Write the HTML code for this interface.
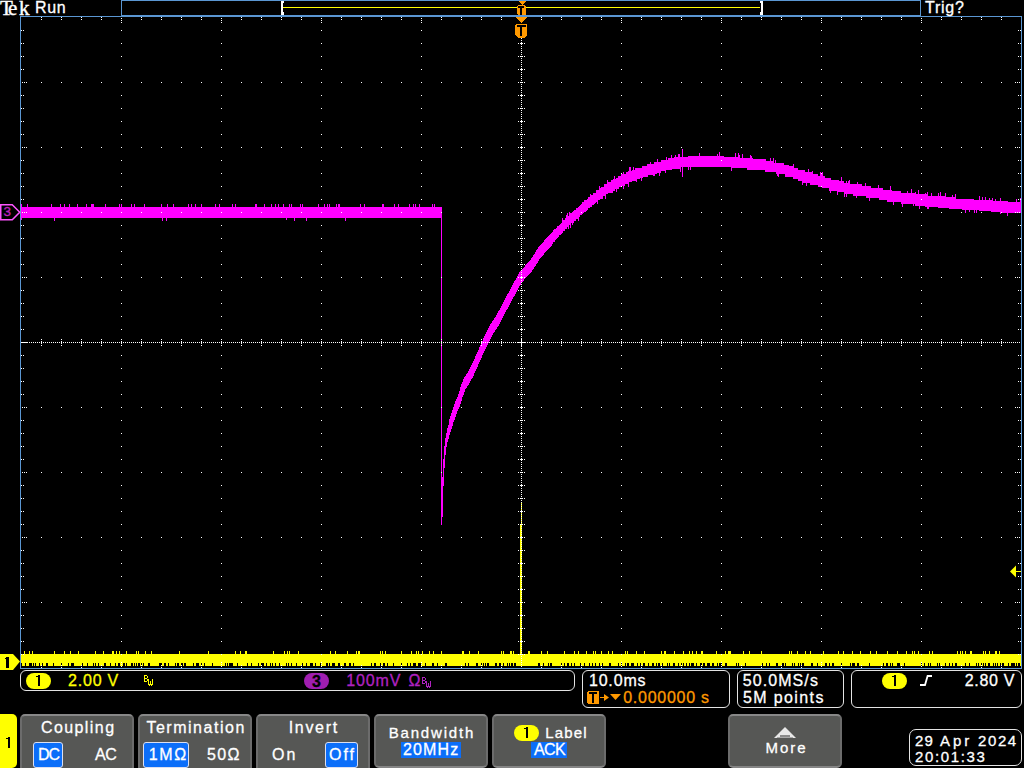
<!DOCTYPE html>
<html><head><meta charset="utf-8"><style>
html,body{margin:0;padding:0;background:#000;width:1024px;height:768px;overflow:hidden;position:relative}
.t{position:absolute;font-family:"Liberation Sans", sans-serif;white-space:pre;line-height:1;color:#fff;-webkit-text-stroke:0.3px currentColor}
.bk{font-size:16px;color:#000;font-weight:bold}
.tek{top:-2px;font-family:'Liberation Serif',serif;font-size:21px;-webkit-text-stroke:0.4px #fff}
.box{position:absolute;border:1px solid #e4e4e4;border-radius:6px;box-sizing:border-box}
.btn{position:absolute;background:#565755;border:2px solid #6c6c6c;border-top-color:#888;border-bottom-color:#858585;border-radius:5px;box-sizing:border-box}
.hl{position:absolute;background:#0b6ef9;border:1px solid #dcdff0;border-radius:3px;box-sizing:border-box}
.pill{position:absolute;border-radius:8px;background:#ffff00}
</style></head><body>
<svg width="1024" height="768" viewBox="0 0 1024 768" shape-rendering="crispEdges" style="position:absolute;left:0;top:0">
<rect x="0" y="0" width="1024" height="768" fill="#000"/>
<!-- record view box -->
<path fill="#5a96d2" d="M121 0h800v1h-800zM121 15h800v1h-800zM121 0h1v16h-1zM920 0h1v16h-1z"/>
<path fill="#ffff00" d="M283 7h477v1h-477z"/>
<path fill="#fff" d="M281 1h2v14h-2zM283 1h1v2h-1zM283 12h1v3h-1zM761 1h2v14h-2zM760 1h1v2h-1zM760 12h1v3h-1z"/>
<!-- graticule border -->
<path fill="#5a96d2" d="M20 16h1002v1h-1002zM20 668h1002v1h-1002zM20 16h1v653h-1zM1021 16h1v653h-1z"/>
<!-- traces -->
<path fill="#ff00ff" d="M21 207h421v11h-421zM441 218h1v307h-1zM442 477h1v40h-1zM443 459h1v27h-1zM444 446h1v22h-1zM445 438h1v17h-1zM446 433h1v14h-1zM447 428h1v14h-1zM448 425h1v14h-1zM449 419h1v16h-1zM450 416h1v16h-1zM451 413h1v16h-1zM452 410h1v16h-1zM453 407h1v15h-1zM454 404h1v16h-1zM455 401h1v16h-1zM456 399h1v15h-1zM457 397h1v14h-1zM458 394h1v15h-1zM459 391h1v16h-1zM460 387h1v17h-1zM461 384h1v17h-1zM462 382h1v15h-1zM463 379h1v16h-1zM464 377h1v15h-1zM465 376h1v13h-1zM466 374h1v14h-1zM467 373h1v13h-1zM468 371h1v14h-1zM469 369h1v14h-1zM470 367h1v14h-1zM471 365h1v14h-1zM472 363h1v15h-1zM473 361h1v15h-1zM474 359h1v14h-1zM475 356h1v15h-1zM476 354h1v15h-1zM477 352h1v15h-1zM478 350h1v14h-1zM479 347h1v15h-1zM480 345h1v15h-1zM481 343h1v15h-1zM482 341h1v14h-1zM483 338h1v15h-1zM484 336h1v15h-1zM485 334h1v15h-1zM486 332h1v15h-1zM487 330h1v15h-1zM488 328h1v15h-1zM489 326h1v15h-1zM490 324h1v15h-1zM491 323h1v14h-1zM492 321h1v14h-1zM493 320h1v13h-1zM494 318h1v14h-1zM495 317h1v13h-1zM496 315h1v14h-1zM497 313h1v14h-1zM498 311h1v15h-1zM499 310h1v14h-1zM500 308h1v14h-1zM501 306h1v14h-1zM502 304h1v14h-1zM503 302h1v14h-1zM504 300h1v14h-1zM505 298h1v14h-1zM506 296h1v14h-1zM507 294h1v15h-1zM508 293h1v14h-1zM509 291h1v14h-1zM510 289h1v14h-1zM511 287h1v14h-1zM512 285h1v14h-1zM513 283h1v14h-1zM514 281h1v15h-1zM515 280h1v14h-1zM516 278h1v14h-1zM517 276h1v14h-1zM518 274h1v14h-1zM519 272h1v14h-1zM520 271h1v14h-1zM521 270h1v13h-1zM522 269h1v13h-1zM523 268h1v13h-1zM524 267h1v12h-1zM525 265h1v13h-1zM526 264h1v13h-1zM527 263h1v13h-1zM528 262h1v13h-1zM529 261h1v13h-1zM530 260h1v13h-1zM531 258h1v14h-1zM532 257h1v13h-1zM533 255h1v14h-1zM534 254h1v13h-1zM535 252h1v14h-1zM536 250h1v14h-1zM537 249h1v14h-1zM538 247h1v14h-1zM539 246h1v13h-1zM540 245h1v13h-1zM541 244h1v13h-1zM542 243h1v13h-1zM543 242h1v13h-1zM544 240h1v13h-1zM545 239h1v13h-1zM546 238h1v13h-1zM547 237h1v13h-1zM548 236h1v13h-1zM549 235h1v13h-1zM550 234h1v13h-1zM551 233h1v13h-1zM552 232h1v12h-1zM553 230h1v12h-1zM554 229h1v13h-1zM555 229h1v11h-1zM556 228h1v11h-1zM557 226h1v12h-1zM558 226h1v11h-1zM559 225h1v10h-1zM560 224h1v11h-1zM561 223h1v11h-1zM562 222h1v11h-1zM563 220h1v11h-1zM564 220h1v11h-1zM565 218h1v11h-1zM566 218h1v11h-1zM567 217h1v10h-1zM568 216h1v11h-1zM569 215h1v10h-1zM570 213h1v12h-1zM571 213h1v10h-1zM572 212h1v11h-1zM573 211h1v12h-1zM574 210h1v11h-1zM575 210h1v11h-1zM576 208h1v11h-1zM577 208h1v11h-1zM578 207h1v11h-1zM579 206h1v11h-1zM580 205h1v10h-1zM581 204h1v11h-1zM582 202h1v12h-1zM583 202h1v11h-1zM584 200h1v12h-1zM585 200h1v12h-1zM586 200h1v11h-1zM587 199h1v11h-1zM588 197h1v11h-1zM589 197h1v11h-1zM590 197h1v10h-1zM591 195h1v12h-1zM592 195h1v10h-1zM593 193h1v12h-1zM594 193h1v11h-1zM595 193h1v10h-1zM596 190h1v12h-1zM597 190h1v12h-1zM598 190h1v10h-1zM599 189h1v11h-1zM600 188h1v11h-1zM601 187h1v12h-1zM602 187h1v12h-1zM603 187h1v9h-1zM604 184h1v12h-1zM605 184h1v12h-1zM606 184h1v10h-1zM607 182h1v12h-1zM608 182h1v11h-1zM609 182h1v11h-1zM610 182h1v11h-1zM611 180h1v13h-1zM612 180h1v11h-1zM613 179h1v12h-1zM614 179h1v12h-1zM615 179h1v10h-1zM616 178h1v11h-1zM617 178h1v11h-1zM618 176h1v13h-1zM619 176h1v11h-1zM620 176h1v11h-1zM621 176h1v11h-1zM622 174h1v12h-1zM623 174h1v12h-1zM624 174h1v12h-1zM625 174h1v10h-1zM626 172h1v12h-1zM627 172h1v12h-1zM628 171h1v13h-1zM629 171h1v11h-1zM630 171h1v11h-1zM631 171h1v11h-1zM632 170h1v11h-1zM633 170h1v11h-1zM634 170h1v11h-1zM635 168h1v13h-1zM636 168h1v11h-1zM637 168h1v11h-1zM638 168h1v11h-1zM639 168h1v11h-1zM640 168h1v10h-1zM641 168h1v10h-1zM642 166h1v12h-1zM643 166h1v11h-1zM644 166h1v11h-1zM645 166h1v11h-1zM646 166h1v11h-1zM647 164h1v13h-1zM648 164h1v11h-1zM649 164h1v11h-1zM650 164h1v11h-1zM651 164h1v11h-1zM652 164h1v11h-1zM653 164h1v10h-1zM654 162h1v12h-1zM655 162h1v12h-1zM656 162h1v12h-1zM657 162h1v11h-1zM658 162h1v11h-1zM659 162h1v11h-1zM660 162h1v11h-1zM661 160h1v11h-1zM662 160h1v11h-1zM663 160h1v11h-1zM664 160h1v11h-1zM665 160h1v10h-1zM666 160h1v10h-1zM667 160h1v10h-1zM668 158h1v12h-1zM669 158h1v12h-1zM670 158h1v12h-1zM671 158h1v12h-1zM672 158h1v11h-1zM673 158h1v11h-1zM674 157h1v12h-1zM675 157h1v12h-1zM676 157h1v12h-1zM677 157h1v12h-1zM678 157h1v12h-1zM679 157h1v12h-1zM680 157h1v12h-1zM681 157h1v10h-1zM682 157h1v10h-1zM683 157h1v10h-1zM684 157h1v10h-1zM685 157h1v10h-1zM686 157h1v10h-1zM687 157h1v10h-1zM688 156h1v11h-1zM689 156h1v11h-1zM690 156h1v11h-1zM691 156h1v11h-1zM692 156h1v11h-1zM693 156h1v11h-1zM694 156h1v11h-1zM695 156h1v11h-1zM696 156h1v11h-1zM697 156h1v11h-1zM698 156h1v11h-1zM699 156h1v11h-1zM700 156h1v11h-1zM701 156h1v11h-1zM702 156h1v11h-1zM703 156h1v11h-1zM704 156h1v11h-1zM705 156h1v11h-1zM706 156h1v11h-1zM707 156h1v11h-1zM708 156h1v11h-1zM709 156h1v11h-1zM710 156h1v11h-1zM711 156h1v11h-1zM712 156h1v11h-1zM713 156h1v11h-1zM714 156h1v11h-1zM715 156h1v11h-1zM716 156h1v11h-1zM717 156h1v11h-1zM718 156h1v11h-1zM719 156h1v11h-1zM720 156h1v11h-1zM721 156h1v11h-1zM722 156h1v11h-1zM723 156h1v11h-1zM724 157h1v10h-1zM725 157h1v10h-1zM726 157h1v10h-1zM727 157h1v10h-1zM728 157h1v10h-1zM729 157h1v10h-1zM730 157h1v10h-1zM731 157h1v11h-1zM732 157h1v11h-1zM733 157h1v11h-1zM734 157h1v11h-1zM735 157h1v11h-1zM736 157h1v11h-1zM737 157h1v11h-1zM738 157h1v11h-1zM739 158h1v10h-1zM740 158h1v10h-1zM741 158h1v10h-1zM742 158h1v10h-1zM743 158h1v10h-1zM744 158h1v10h-1zM745 158h1v10h-1zM746 158h1v10h-1zM747 158h1v12h-1zM748 158h1v12h-1zM749 158h1v12h-1zM750 158h1v12h-1zM751 158h1v12h-1zM752 158h1v12h-1zM753 159h1v11h-1zM754 159h1v11h-1zM755 159h1v11h-1zM756 159h1v11h-1zM757 159h1v11h-1zM758 159h1v11h-1zM759 159h1v11h-1zM760 159h1v11h-1zM761 159h1v11h-1zM762 159h1v11h-1zM763 159h1v11h-1zM764 159h1v11h-1zM765 159h1v13h-1zM766 161h1v11h-1zM767 161h1v11h-1zM768 161h1v11h-1zM769 161h1v11h-1zM770 161h1v11h-1zM771 161h1v11h-1zM772 161h1v11h-1zM773 161h1v11h-1zM774 163h1v9h-1zM775 163h1v9h-1zM776 163h1v11h-1zM777 163h1v11h-1zM778 163h1v11h-1zM779 163h1v11h-1zM780 163h1v11h-1zM781 163h1v11h-1zM782 163h1v11h-1zM783 163h1v11h-1zM784 165h1v9h-1zM785 165h1v12h-1zM786 165h1v12h-1zM787 165h1v12h-1zM788 165h1v12h-1zM789 166h1v11h-1zM790 166h1v11h-1zM791 166h1v11h-1zM792 166h1v11h-1zM793 168h1v11h-1zM794 168h1v11h-1zM795 168h1v11h-1zM796 168h1v11h-1zM797 168h1v11h-1zM798 170h1v11h-1zM799 170h1v11h-1zM800 170h1v11h-1zM801 170h1v11h-1zM802 170h1v13h-1zM803 170h1v13h-1zM804 170h1v13h-1zM805 172h1v11h-1zM806 172h1v11h-1zM807 172h1v11h-1zM808 172h1v11h-1zM809 172h1v11h-1zM810 172h1v13h-1zM811 172h1v13h-1zM812 174h1v11h-1zM813 174h1v11h-1zM814 174h1v11h-1zM815 174h1v11h-1zM816 174h1v11h-1zM817 174h1v11h-1zM818 176h1v11h-1zM819 176h1v11h-1zM820 176h1v11h-1zM821 176h1v11h-1zM822 176h1v12h-1zM823 176h1v12h-1zM824 176h1v12h-1zM825 178h1v10h-1zM826 178h1v10h-1zM827 178h1v10h-1zM828 178h1v10h-1zM829 178h1v13h-1zM830 178h1v13h-1zM831 180h1v11h-1zM832 180h1v11h-1zM833 180h1v11h-1zM834 180h1v11h-1zM835 180h1v11h-1zM836 180h1v11h-1zM837 180h1v12h-1zM838 180h1v12h-1zM839 181h1v11h-1zM840 181h1v11h-1zM841 181h1v11h-1zM842 181h1v11h-1zM843 181h1v11h-1zM844 183h1v11h-1zM845 183h1v11h-1zM846 183h1v11h-1zM847 183h1v11h-1zM848 183h1v11h-1zM849 183h1v11h-1zM850 184h1v10h-1zM851 184h1v10h-1zM852 184h1v10h-1zM853 184h1v12h-1zM854 184h1v12h-1zM855 184h1v12h-1zM856 184h1v12h-1zM857 184h1v12h-1zM858 184h1v12h-1zM859 184h1v12h-1zM860 184h1v12h-1zM861 184h1v12h-1zM862 186h1v10h-1zM863 186h1v10h-1zM864 186h1v10h-1zM865 186h1v10h-1zM866 186h1v12h-1zM867 186h1v12h-1zM868 186h1v12h-1zM869 186h1v12h-1zM870 186h1v12h-1zM871 188h1v10h-1zM872 188h1v10h-1zM873 188h1v10h-1zM874 188h1v10h-1zM875 188h1v10h-1zM876 188h1v10h-1zM877 188h1v10h-1zM878 188h1v10h-1zM879 188h1v12h-1zM880 188h1v12h-1zM881 188h1v12h-1zM882 188h1v12h-1zM883 190h1v10h-1zM884 190h1v10h-1zM885 190h1v10h-1zM886 190h1v10h-1zM887 190h1v12h-1zM888 190h1v12h-1zM889 190h1v12h-1zM890 190h1v12h-1zM891 190h1v12h-1zM892 191h1v11h-1zM893 191h1v11h-1zM894 191h1v11h-1zM895 191h1v11h-1zM896 191h1v11h-1zM897 191h1v11h-1zM898 191h1v11h-1zM899 191h1v11h-1zM900 191h1v11h-1zM901 193h1v11h-1zM902 193h1v11h-1zM903 193h1v11h-1zM904 193h1v11h-1zM905 193h1v11h-1zM906 193h1v11h-1zM907 193h1v11h-1zM908 193h1v11h-1zM909 193h1v11h-1zM910 193h1v11h-1zM911 193h1v11h-1zM912 193h1v11h-1zM913 193h1v11h-1zM914 193h1v11h-1zM915 194h1v12h-1zM916 194h1v12h-1zM917 194h1v12h-1zM918 194h1v12h-1zM919 194h1v12h-1zM920 194h1v12h-1zM921 194h1v12h-1zM922 194h1v12h-1zM923 194h1v12h-1zM924 194h1v12h-1zM925 196h1v11h-1zM926 196h1v11h-1zM927 196h1v11h-1zM928 196h1v11h-1zM929 196h1v11h-1zM930 196h1v11h-1zM931 196h1v11h-1zM932 196h1v11h-1zM933 196h1v11h-1zM934 196h1v11h-1zM935 196h1v11h-1zM936 196h1v11h-1zM937 196h1v11h-1zM938 196h1v12h-1zM939 196h1v12h-1zM940 196h1v12h-1zM941 196h1v12h-1zM942 196h1v12h-1zM943 196h1v12h-1zM944 196h1v12h-1zM945 197h1v11h-1zM946 197h1v11h-1zM947 197h1v11h-1zM948 197h1v11h-1zM949 197h1v12h-1zM950 197h1v12h-1zM951 197h1v12h-1zM952 197h1v12h-1zM953 197h1v12h-1zM954 197h1v12h-1zM955 197h1v12h-1zM956 199h1v10h-1zM957 199h1v10h-1zM958 199h1v10h-1zM959 199h1v10h-1zM960 199h1v10h-1zM961 199h1v10h-1zM962 199h1v11h-1zM963 199h1v11h-1zM964 199h1v11h-1zM965 199h1v11h-1zM966 199h1v11h-1zM967 199h1v11h-1zM968 199h1v11h-1zM969 199h1v11h-1zM970 199h1v11h-1zM971 199h1v11h-1zM972 199h1v11h-1zM973 199h1v11h-1zM974 200h1v10h-1zM975 200h1v10h-1zM976 200h1v10h-1zM977 200h1v10h-1zM978 200h1v10h-1zM979 200h1v11h-1zM980 200h1v11h-1zM981 200h1v11h-1zM982 200h1v11h-1zM983 200h1v11h-1zM984 200h1v11h-1zM985 200h1v11h-1zM986 200h1v11h-1zM987 200h1v11h-1zM988 200h1v11h-1zM989 200h1v11h-1zM990 200h1v11h-1zM991 200h1v12h-1zM992 200h1v12h-1zM993 201h1v11h-1zM994 201h1v11h-1zM995 201h1v11h-1zM996 201h1v11h-1zM997 201h1v11h-1zM998 201h1v11h-1zM999 201h1v11h-1zM1000 201h1v11h-1zM1001 201h1v11h-1zM1002 201h1v12h-1zM1003 201h1v12h-1zM1004 201h1v12h-1zM1005 201h1v12h-1zM1006 201h1v12h-1zM1007 201h1v12h-1zM1008 202h1v11h-1zM1009 202h1v11h-1zM1010 202h1v11h-1zM1011 202h1v11h-1zM1012 202h1v11h-1zM1013 202h1v11h-1zM1014 202h1v11h-1zM1015 202h1v11h-1zM1016 202h1v11h-1zM1017 202h1v11h-1zM1018 202h1v11h-1zM1019 202h1v11h-1zM1020 202h1v11h-1zM21 204h1v3h-1zM21 218h1v2h-1zM27 204h1v3h-1zM51 204h1v3h-1zM54 218h1v3h-1zM60 204h1v3h-1zM64 204h1v3h-1zM69 204h1v3h-1zM77 204h1v3h-1zM86 204h1v3h-1zM91 204h1v3h-1zM92 204h1v3h-1zM93 204h1v3h-1zM105 204h1v3h-1zM119 204h1v3h-1zM121 204h1v3h-1zM131 204h1v3h-1zM134 204h1v3h-1zM144 204h1v3h-1zM161 204h1v3h-1zM162 218h1v3h-1zM166 218h1v3h-1zM167 204h1v3h-1zM173 204h1v3h-1zM188 204h1v3h-1zM191 204h1v3h-1zM195 204h1v3h-1zM201 204h1v3h-1zM215 204h1v3h-1zM219 204h1v3h-1zM232 204h1v3h-1zM235 204h1v3h-1zM255 204h1v3h-1zM256 204h1v3h-1zM264 204h1v3h-1zM271 204h1v3h-1zM275 204h1v3h-1zM278 204h1v3h-1zM283 204h1v3h-1zM286 218h1v2h-1zM289 204h1v3h-1zM291 204h1v3h-1zM294 218h1v3h-1zM300 204h1v3h-1zM302 204h1v3h-1zM306 218h1v3h-1zM318 204h1v3h-1zM324 204h1v3h-1zM327 204h1v3h-1zM329 204h1v3h-1zM336 204h1v3h-1zM338 204h1v3h-1zM339 204h1v3h-1zM345 218h1v3h-1zM360 204h1v3h-1zM364 204h1v3h-1zM382 204h1v3h-1zM383 204h1v3h-1zM394 204h1v3h-1zM398 204h1v3h-1zM409 204h1v3h-1zM413 204h1v3h-1zM415 204h1v3h-1zM419 204h1v3h-1zM432 204h1v3h-1zM434 204h1v3h-1zM562 218h1v4h-1zM566 215h1v3h-1zM567 213h1v4h-1zM568 227h1v2h-1zM569 212h1v3h-1zM570 225h1v3h-1zM572 223h1v2h-1zM578 218h1v3h-1zM590 194h1v3h-1zM597 202h1v2h-1zM599 186h1v3h-1zM605 196h1v3h-1zM607 180h1v2h-1zM612 191h1v2h-1zM614 176h1v3h-1zM616 189h1v3h-1zM621 174h1v2h-1zM623 172h1v2h-1zM623 186h1v3h-1zM628 184h1v3h-1zM629 167h1v4h-1zM630 167h1v4h-1zM633 167h1v3h-1zM636 179h1v3h-1zM641 178h1v3h-1zM650 162h1v2h-1zM653 174h1v2h-1zM654 174h1v2h-1zM657 159h1v3h-1zM659 173h1v3h-1zM665 170h1v3h-1zM666 157h1v3h-1zM671 155h1v3h-1zM675 155h1v2h-1zM678 154h1v3h-1zM679 154h1v3h-1zM680 169h1v3h-1zM688 167h1v3h-1zM690 167h1v3h-1zM699 153h1v3h-1zM717 154h1v2h-1zM719 152h1v4h-1zM731 168h1v3h-1zM735 153h1v4h-1zM738 153h1v4h-1zM739 155h1v3h-1zM742 154h1v4h-1zM750 155h1v3h-1zM751 156h1v2h-1zM770 158h1v3h-1zM773 158h1v3h-1zM775 160h1v3h-1zM777 174h1v2h-1zM778 174h1v3h-1zM793 164h1v4h-1zM802 183h1v2h-1zM806 183h1v3h-1zM808 169h1v3h-1zM812 171h1v3h-1zM820 172h1v4h-1zM821 173h1v3h-1zM822 172h1v4h-1zM830 191h1v2h-1zM837 192h1v3h-1zM841 177h1v4h-1zM844 194h1v3h-1zM846 181h1v2h-1zM846 194h1v3h-1zM848 181h1v2h-1zM849 180h1v3h-1zM856 196h1v2h-1zM857 182h1v2h-1zM865 183h1v3h-1zM869 198h1v3h-1zM878 185h1v3h-1zM890 186h1v4h-1zM893 202h1v3h-1zM902 204h1v3h-1zM907 191h1v2h-1zM911 189h1v4h-1zM913 204h1v2h-1zM915 192h1v2h-1zM918 190h1v4h-1zM919 206h1v3h-1zM925 193h1v3h-1zM926 194h1v2h-1zM927 192h1v4h-1zM927 207h1v2h-1zM928 207h1v2h-1zM931 193h1v3h-1zM938 193h1v3h-1zM940 192h1v4h-1zM945 193h1v4h-1zM952 195h1v2h-1zM955 194h1v3h-1zM965 210h1v3h-1zM969 210h1v2h-1zM974 210h1v3h-1zM976 210h1v3h-1zM979 196h1v4h-1zM982 197h1v3h-1zM985 197h1v3h-1zM989 198h1v2h-1zM992 198h1v2h-1zM995 199h1v2h-1zM1000 198h1v3h-1zM1000 212h1v2h-1zM1007 213h1v3h-1zM1016 199h1v3h-1zM1020 198h1v4h-1zM682 149h1v28h-1z"/>
<path fill="#ffff00" d="M21 654h1000v12h-1000zM521 502h1v23h-1zM520 525h2v129h-2zM24 651h1v3h-1zM29 651h1v3h-1zM32 651h1v3h-1zM54 651h1v3h-1zM64 651h1v3h-1zM70 651h1v3h-1zM78 651h1v3h-1zM95 651h1v3h-1zM103 651h1v3h-1zM112 651h1v3h-1zM113 651h1v3h-1zM116 651h1v3h-1zM119 651h1v3h-1zM126 651h1v3h-1zM136 651h1v3h-1zM138 651h1v3h-1zM145 651h1v3h-1zM151 651h1v3h-1zM179 651h1v3h-1zM208 651h1v3h-1zM235 651h1v3h-1zM240 651h1v3h-1zM245 651h1v3h-1zM246 651h1v3h-1zM273 651h1v3h-1zM284 651h1v3h-1zM287 651h1v3h-1zM289 651h1v3h-1zM298 651h1v3h-1zM330 651h1v3h-1zM335 651h1v3h-1zM347 651h1v3h-1zM356 651h1v3h-1zM358 651h1v3h-1zM359 651h1v3h-1zM380 651h1v3h-1zM382 651h1v3h-1zM385 651h1v3h-1zM401 651h1v3h-1zM411 651h1v3h-1zM416 651h1v3h-1zM418 651h1v3h-1zM422 651h1v3h-1zM429 651h1v3h-1zM433 651h1v3h-1zM441 651h1v3h-1zM462 651h1v3h-1zM463 651h1v3h-1zM469 651h1v3h-1zM478 651h1v3h-1zM501 651h1v3h-1zM503 651h1v3h-1zM510 651h1v3h-1zM511 651h1v3h-1zM513 651h1v3h-1zM528 651h1v3h-1zM529 651h1v3h-1zM541 651h1v3h-1zM547 651h1v3h-1zM564 651h1v3h-1zM574 651h1v3h-1zM578 651h1v3h-1zM586 651h1v3h-1zM593 651h1v3h-1zM595 651h1v3h-1zM601 651h1v3h-1zM608 651h1v3h-1zM612 651h1v3h-1zM625 651h1v3h-1zM627 651h1v3h-1zM636 651h1v3h-1zM644 651h1v3h-1zM661 651h1v3h-1zM664 651h1v3h-1zM665 651h1v3h-1zM674 651h1v3h-1zM683 651h1v3h-1zM689 651h1v3h-1zM692 651h1v3h-1zM696 651h1v3h-1zM701 651h1v3h-1zM702 651h1v3h-1zM716 651h1v3h-1zM725 651h1v3h-1zM728 651h1v3h-1zM729 651h1v3h-1zM730 651h1v3h-1zM743 651h1v3h-1zM749 651h1v3h-1zM761 651h1v3h-1zM789 651h1v3h-1zM791 651h1v3h-1zM797 651h1v3h-1zM805 651h1v3h-1zM810 651h1v3h-1zM823 651h1v3h-1zM838 651h1v3h-1zM843 651h1v3h-1zM852 651h1v3h-1zM860 651h1v3h-1zM870 651h1v3h-1zM876 651h1v3h-1zM887 651h1v3h-1zM897 651h1v3h-1zM906 651h1v3h-1zM912 651h1v3h-1zM914 651h1v3h-1zM918 651h1v3h-1zM929 651h1v3h-1zM932 651h1v3h-1zM957 651h1v3h-1zM960 651h1v3h-1zM962 651h1v3h-1zM965 651h1v3h-1zM970 651h1v3h-1zM971 651h1v3h-1zM983 651h1v3h-1zM985 651h1v3h-1zM989 651h1v3h-1zM995 651h1v3h-1zM996 651h1v3h-1zM999 651h1v3h-1z"/>
<path fill="#000" d="M21 663h1v3h-1zM25 663h1v3h-1zM29 663h1v3h-1zM30 663h1v3h-1zM31 663h1v3h-1zM33 663h1v3h-1zM35 663h1v3h-1zM39 663h1v3h-1zM42 663h1v3h-1zM46 663h1v3h-1zM47 663h1v3h-1zM53 663h1v3h-1zM61 663h1v3h-1zM68 663h1v3h-1zM71 663h1v3h-1zM72 663h1v3h-1zM73 663h1v3h-1zM82 663h1v3h-1zM87 663h1v3h-1zM93 663h1v3h-1zM95 663h1v3h-1zM98 663h1v3h-1zM104 663h1v3h-1zM105 663h1v3h-1zM110 663h1v3h-1zM115 663h1v3h-1zM118 663h1v3h-1zM119 663h1v3h-1zM123 663h1v3h-1zM124 663h1v3h-1zM126 663h1v3h-1zM131 663h1v3h-1zM132 663h1v3h-1zM134 663h1v3h-1zM136 663h1v3h-1zM138 663h1v3h-1zM139 663h1v3h-1zM141 663h1v3h-1zM143 663h1v3h-1zM148 663h1v3h-1zM149 663h1v3h-1zM159 663h1v3h-1zM160 663h1v3h-1zM161 663h1v3h-1zM164 663h1v3h-1zM165 663h1v3h-1zM168 663h1v3h-1zM175 663h1v3h-1zM177 663h1v3h-1zM178 663h1v3h-1zM181 663h1v3h-1zM182 663h1v3h-1zM184 663h1v3h-1zM185 663h1v3h-1zM193 663h1v3h-1zM196 663h1v3h-1zM197 663h1v3h-1zM198 663h1v3h-1zM201 663h1v3h-1zM204 663h1v3h-1zM212 663h1v3h-1zM225 663h1v3h-1zM227 663h1v3h-1zM229 663h1v3h-1zM230 663h1v3h-1zM231 663h1v3h-1zM232 663h1v3h-1zM237 663h1v3h-1zM247 663h1v3h-1zM251 663h1v3h-1zM258 663h1v3h-1zM261 663h1v3h-1zM262 663h1v3h-1zM263 663h1v3h-1zM266 663h1v3h-1zM270 663h1v3h-1zM272 663h1v3h-1zM275 663h1v3h-1zM279 663h1v3h-1zM286 663h1v3h-1zM288 663h1v3h-1zM291 663h1v3h-1zM296 663h1v3h-1zM302 663h1v3h-1zM306 663h1v3h-1zM310 663h1v3h-1zM311 663h1v3h-1zM312 663h1v3h-1zM315 663h1v3h-1zM320 663h1v3h-1zM326 663h1v3h-1zM327 663h1v3h-1zM329 663h1v3h-1zM332 663h1v3h-1zM333 663h1v3h-1zM334 663h1v3h-1zM338 663h1v3h-1zM339 663h1v3h-1zM344 663h1v3h-1zM345 663h1v3h-1zM349 663h1v3h-1zM350 663h1v3h-1zM353 663h1v3h-1zM371 663h1v3h-1zM374 663h1v3h-1zM375 663h1v3h-1zM380 663h1v3h-1zM383 663h1v3h-1zM384 663h1v3h-1zM387 663h1v3h-1zM393 663h1v3h-1zM401 663h1v3h-1zM407 663h1v3h-1zM410 663h1v3h-1zM413 663h1v3h-1zM414 663h1v3h-1zM415 663h1v3h-1zM418 663h1v3h-1zM419 663h1v3h-1zM420 663h1v3h-1zM425 663h1v3h-1zM432 663h1v3h-1zM433 663h1v3h-1zM437 663h1v3h-1zM445 663h1v3h-1zM446 663h1v3h-1zM465 663h1v3h-1zM468 663h1v3h-1zM476 663h1v3h-1zM477 663h1v3h-1zM481 663h1v3h-1zM483 663h1v3h-1zM485 663h1v3h-1zM487 663h1v3h-1zM488 663h1v3h-1zM495 663h1v3h-1zM496 663h1v3h-1zM499 663h1v3h-1zM500 663h1v3h-1zM503 663h1v3h-1zM507 663h1v3h-1zM509 663h1v3h-1zM511 663h1v3h-1zM512 663h1v3h-1zM514 663h1v3h-1zM515 663h1v3h-1zM538 663h1v3h-1zM539 663h1v3h-1zM543 663h1v3h-1zM548 663h1v3h-1zM550 663h1v3h-1zM551 663h1v3h-1zM561 663h1v3h-1zM564 663h1v3h-1zM567 663h1v3h-1zM568 663h1v3h-1zM571 663h1v3h-1zM574 663h1v3h-1zM580 663h1v3h-1zM584 663h1v3h-1zM589 663h1v3h-1zM592 663h1v3h-1zM595 663h1v3h-1zM599 663h1v3h-1zM602 663h1v3h-1zM609 663h1v3h-1zM610 663h1v3h-1zM618 663h1v3h-1zM621 663h1v3h-1zM625 663h1v3h-1zM627 663h1v3h-1zM628 663h1v3h-1zM631 663h1v3h-1zM632 663h1v3h-1zM633 663h1v3h-1zM637 663h1v3h-1zM640 663h1v3h-1zM643 663h1v3h-1zM644 663h1v3h-1zM648 663h1v3h-1zM652 663h1v3h-1zM653 663h1v3h-1zM656 663h1v3h-1zM658 663h1v3h-1zM659 663h1v3h-1zM662 663h1v3h-1zM667 663h1v3h-1zM669 663h1v3h-1zM673 663h1v3h-1zM674 663h1v3h-1zM678 663h1v3h-1zM681 663h1v3h-1zM683 663h1v3h-1zM686 663h1v3h-1zM689 663h1v3h-1zM691 663h1v3h-1zM692 663h1v3h-1zM693 663h1v3h-1zM696 663h1v3h-1zM700 663h1v3h-1zM701 663h1v3h-1zM703 663h1v3h-1zM704 663h1v3h-1zM707 663h1v3h-1zM708 663h1v3h-1zM709 663h1v3h-1zM712 663h1v3h-1zM713 663h1v3h-1zM717 663h1v3h-1zM719 663h1v3h-1zM720 663h1v3h-1zM721 663h1v3h-1zM725 663h1v3h-1zM726 663h1v3h-1zM736 663h1v3h-1zM738 663h1v3h-1zM745 663h1v3h-1zM762 663h1v3h-1zM766 663h1v3h-1zM769 663h1v3h-1zM776 663h1v3h-1zM777 663h1v3h-1zM782 663h1v3h-1zM783 663h1v3h-1zM785 663h1v3h-1zM792 663h1v3h-1zM794 663h1v3h-1zM798 663h1v3h-1zM800 663h1v3h-1zM802 663h1v3h-1zM803 663h1v3h-1zM811 663h1v3h-1zM812 663h1v3h-1zM817 663h1v3h-1zM825 663h1v3h-1zM826 663h1v3h-1zM829 663h1v3h-1zM832 663h1v3h-1zM833 663h1v3h-1zM841 663h1v3h-1zM850 663h1v3h-1zM852 663h1v3h-1zM853 663h1v3h-1zM854 663h1v3h-1zM857 663h1v3h-1zM858 663h1v3h-1zM869 663h1v3h-1zM883 663h1v3h-1zM886 663h1v3h-1zM887 663h1v3h-1zM890 663h1v3h-1zM892 663h1v3h-1zM897 663h1v3h-1zM898 663h1v3h-1zM899 663h1v3h-1zM904 663h1v3h-1zM921 663h1v3h-1zM924 663h1v3h-1zM928 663h1v3h-1zM930 663h1v3h-1zM937 663h1v3h-1zM939 663h1v3h-1zM945 663h1v3h-1zM949 663h1v3h-1zM952 663h1v3h-1zM955 663h1v3h-1zM956 663h1v3h-1zM965 663h1v3h-1zM969 663h1v3h-1zM976 663h1v3h-1zM978 663h1v3h-1zM981 663h1v3h-1zM983 663h1v3h-1zM985 663h1v3h-1zM988 663h1v3h-1zM989 663h1v3h-1zM993 663h1v3h-1zM995 663h1v3h-1zM997 663h1v3h-1zM1000 663h1v3h-1zM1002 663h1v3h-1zM1003 663h1v3h-1zM1008 663h1v3h-1zM1011 663h1v3h-1zM1012 663h1v3h-1zM1013 663h1v3h-1zM1014 663h1v3h-1zM1016 663h1v3h-1zM1018 663h1v3h-1zM1019 663h1v3h-1z"/>
<!-- grid dots -->
<path fill="#ffffff" d="M21 30h1v1h-1zM21 43h1v1h-1zM21 56h1v1h-1zM21 69h1v1h-1zM21 95h1v1h-1zM21 108h1v1h-1zM21 121h1v1h-1zM21 134h1v1h-1zM21 160h1v1h-1zM21 173h1v1h-1zM21 186h1v1h-1zM21 199h1v1h-1zM21 225h1v1h-1zM21 238h1v1h-1zM21 251h1v1h-1zM21 264h1v1h-1zM21 290h1v1h-1zM21 303h1v1h-1zM21 316h1v1h-1zM21 329h1v1h-1zM21 342h1v1h-1zM21 355h1v1h-1zM21 368h1v1h-1zM21 381h1v1h-1zM21 394h1v1h-1zM21 420h1v1h-1zM21 433h1v1h-1zM21 446h1v1h-1zM21 459h1v1h-1zM21 485h1v1h-1zM21 498h1v1h-1zM21 511h1v1h-1zM21 524h1v1h-1zM21 550h1v1h-1zM21 563h1v1h-1zM21 576h1v1h-1zM21 589h1v1h-1zM21 615h1v1h-1zM21 628h1v1h-1zM21 641h1v1h-1zM21 654h1v1h-1zM22 82h1v1h-1zM22 147h1v1h-1zM22 212h1v1h-1zM22 277h1v1h-1zM22 342h1v1h-1zM22 407h1v1h-1zM22 472h1v1h-1zM22 537h1v1h-1zM22 602h1v1h-1zM23 30h1v1h-1zM23 43h1v1h-1zM23 56h1v1h-1zM23 69h1v1h-1zM23 95h1v1h-1zM23 108h1v1h-1zM23 121h1v1h-1zM23 134h1v1h-1zM23 160h1v1h-1zM23 173h1v1h-1zM23 186h1v1h-1zM23 199h1v1h-1zM23 225h1v1h-1zM23 238h1v1h-1zM23 251h1v1h-1zM23 264h1v1h-1zM23 290h1v1h-1zM23 303h1v1h-1zM23 316h1v1h-1zM23 329h1v1h-1zM23 342h1v1h-1zM23 355h1v1h-1zM23 368h1v1h-1zM23 381h1v1h-1zM23 394h1v1h-1zM23 420h1v1h-1zM23 433h1v1h-1zM23 446h1v1h-1zM23 459h1v1h-1zM23 485h1v1h-1zM23 498h1v1h-1zM23 511h1v1h-1zM23 524h1v1h-1zM23 550h1v1h-1zM23 563h1v1h-1zM23 576h1v1h-1zM23 589h1v1h-1zM23 615h1v1h-1zM23 628h1v1h-1zM23 641h1v1h-1zM23 654h1v1h-1zM24 82h1v1h-1zM24 147h1v1h-1zM24 212h1v1h-1zM24 277h1v1h-1zM24 342h1v1h-1zM24 407h1v1h-1zM24 472h1v1h-1zM24 537h1v1h-1zM24 602h1v1h-1zM25 342h1v1h-1zM26 82h1v1h-1zM26 147h1v1h-1zM26 212h1v1h-1zM26 277h1v1h-1zM26 342h1v1h-1zM26 407h1v1h-1zM26 472h1v1h-1zM26 537h1v1h-1zM26 602h1v1h-1zM27 342h1v1h-1zM29 342h1v1h-1zM31 342h1v1h-1zM33 342h1v1h-1zM35 342h1v1h-1zM37 342h1v1h-1zM39 342h1v1h-1zM41 17h1v1h-1zM41 19h1v1h-1zM41 82h1v1h-1zM41 147h1v1h-1zM41 212h1v1h-1zM41 277h1v1h-1zM41 339h1v1h-1zM41 341h1v1h-1zM41 342h1v1h-1zM41 343h1v1h-1zM41 345h1v1h-1zM41 407h1v1h-1zM41 472h1v1h-1zM41 537h1v1h-1zM41 602h1v1h-1zM41 665h1v1h-1zM41 667h1v1h-1zM43 342h1v1h-1zM45 342h1v1h-1zM47 342h1v1h-1zM49 342h1v1h-1zM51 342h1v1h-1zM53 342h1v1h-1zM55 342h1v1h-1zM57 342h1v1h-1zM59 342h1v1h-1zM61 17h1v1h-1zM61 19h1v1h-1zM61 82h1v1h-1zM61 147h1v1h-1zM61 212h1v1h-1zM61 277h1v1h-1zM61 339h1v1h-1zM61 341h1v1h-1zM61 342h1v1h-1zM61 343h1v1h-1zM61 345h1v1h-1zM61 407h1v1h-1zM61 472h1v1h-1zM61 537h1v1h-1zM61 602h1v1h-1zM61 665h1v1h-1zM61 667h1v1h-1zM63 342h1v1h-1zM65 342h1v1h-1zM67 342h1v1h-1zM69 342h1v1h-1zM71 342h1v1h-1zM73 342h1v1h-1zM75 342h1v1h-1zM77 342h1v1h-1zM79 342h1v1h-1zM81 17h1v1h-1zM81 19h1v1h-1zM81 82h1v1h-1zM81 147h1v1h-1zM81 212h1v1h-1zM81 277h1v1h-1zM81 339h1v1h-1zM81 341h1v1h-1zM81 342h1v1h-1zM81 343h1v1h-1zM81 345h1v1h-1zM81 407h1v1h-1zM81 472h1v1h-1zM81 537h1v1h-1zM81 602h1v1h-1zM81 665h1v1h-1zM81 667h1v1h-1zM83 342h1v1h-1zM85 342h1v1h-1zM87 342h1v1h-1zM89 342h1v1h-1zM91 342h1v1h-1zM93 342h1v1h-1zM95 342h1v1h-1zM97 342h1v1h-1zM99 342h1v1h-1zM101 17h1v1h-1zM101 19h1v1h-1zM101 82h1v1h-1zM101 147h1v1h-1zM101 212h1v1h-1zM101 277h1v1h-1zM101 339h1v1h-1zM101 341h1v1h-1zM101 342h1v1h-1zM101 343h1v1h-1zM101 345h1v1h-1zM101 407h1v1h-1zM101 472h1v1h-1zM101 537h1v1h-1zM101 602h1v1h-1zM101 665h1v1h-1zM101 667h1v1h-1zM103 342h1v1h-1zM105 342h1v1h-1zM107 342h1v1h-1zM109 342h1v1h-1zM111 342h1v1h-1zM113 342h1v1h-1zM115 342h1v1h-1zM117 342h1v1h-1zM119 342h1v1h-1zM121 18h1v1h-1zM121 20h1v1h-1zM121 22h1v1h-1zM121 30h1v1h-1zM121 43h1v1h-1zM121 56h1v1h-1zM121 69h1v1h-1zM121 82h1v1h-1zM121 95h1v1h-1zM121 108h1v1h-1zM121 121h1v1h-1zM121 134h1v1h-1zM121 147h1v1h-1zM121 160h1v1h-1zM121 173h1v1h-1zM121 186h1v1h-1zM121 199h1v1h-1zM121 212h1v1h-1zM121 225h1v1h-1zM121 238h1v1h-1zM121 251h1v1h-1zM121 264h1v1h-1zM121 277h1v1h-1zM121 290h1v1h-1zM121 303h1v1h-1zM121 316h1v1h-1zM121 329h1v1h-1zM121 339h1v1h-1zM121 341h1v1h-1zM121 342h1v1h-1zM121 343h1v1h-1zM121 345h1v1h-1zM121 355h1v1h-1zM121 368h1v1h-1zM121 381h1v1h-1zM121 394h1v1h-1zM121 407h1v1h-1zM121 420h1v1h-1zM121 433h1v1h-1zM121 446h1v1h-1zM121 459h1v1h-1zM121 472h1v1h-1zM121 485h1v1h-1zM121 498h1v1h-1zM121 511h1v1h-1zM121 524h1v1h-1zM121 537h1v1h-1zM121 550h1v1h-1zM121 563h1v1h-1zM121 576h1v1h-1zM121 589h1v1h-1zM121 602h1v1h-1zM121 615h1v1h-1zM121 628h1v1h-1zM121 641h1v1h-1zM121 654h1v1h-1zM121 662h1v1h-1zM121 664h1v1h-1zM121 666h1v1h-1zM123 342h1v1h-1zM125 342h1v1h-1zM127 342h1v1h-1zM129 342h1v1h-1zM131 342h1v1h-1zM133 342h1v1h-1zM135 342h1v1h-1zM137 342h1v1h-1zM139 342h1v1h-1zM141 17h1v1h-1zM141 19h1v1h-1zM141 82h1v1h-1zM141 147h1v1h-1zM141 212h1v1h-1zM141 277h1v1h-1zM141 339h1v1h-1zM141 341h1v1h-1zM141 342h1v1h-1zM141 343h1v1h-1zM141 345h1v1h-1zM141 407h1v1h-1zM141 472h1v1h-1zM141 537h1v1h-1zM141 602h1v1h-1zM141 665h1v1h-1zM141 667h1v1h-1zM143 342h1v1h-1zM145 342h1v1h-1zM147 342h1v1h-1zM149 342h1v1h-1zM151 342h1v1h-1zM153 342h1v1h-1zM155 342h1v1h-1zM157 342h1v1h-1zM159 342h1v1h-1zM161 17h1v1h-1zM161 19h1v1h-1zM161 82h1v1h-1zM161 147h1v1h-1zM161 212h1v1h-1zM161 277h1v1h-1zM161 339h1v1h-1zM161 341h1v1h-1zM161 342h1v1h-1zM161 343h1v1h-1zM161 345h1v1h-1zM161 407h1v1h-1zM161 472h1v1h-1zM161 537h1v1h-1zM161 602h1v1h-1zM161 665h1v1h-1zM161 667h1v1h-1zM163 342h1v1h-1zM165 342h1v1h-1zM167 342h1v1h-1zM169 342h1v1h-1zM171 342h1v1h-1zM173 342h1v1h-1zM175 342h1v1h-1zM177 342h1v1h-1zM179 342h1v1h-1zM181 17h1v1h-1zM181 19h1v1h-1zM181 82h1v1h-1zM181 147h1v1h-1zM181 212h1v1h-1zM181 277h1v1h-1zM181 339h1v1h-1zM181 341h1v1h-1zM181 342h1v1h-1zM181 343h1v1h-1zM181 345h1v1h-1zM181 407h1v1h-1zM181 472h1v1h-1zM181 537h1v1h-1zM181 602h1v1h-1zM181 665h1v1h-1zM181 667h1v1h-1zM183 342h1v1h-1zM185 342h1v1h-1zM187 342h1v1h-1zM189 342h1v1h-1zM191 342h1v1h-1zM193 342h1v1h-1zM195 342h1v1h-1zM197 342h1v1h-1zM199 342h1v1h-1zM201 17h1v1h-1zM201 19h1v1h-1zM201 82h1v1h-1zM201 147h1v1h-1zM201 212h1v1h-1zM201 277h1v1h-1zM201 339h1v1h-1zM201 341h1v1h-1zM201 342h1v1h-1zM201 343h1v1h-1zM201 345h1v1h-1zM201 407h1v1h-1zM201 472h1v1h-1zM201 537h1v1h-1zM201 602h1v1h-1zM201 665h1v1h-1zM201 667h1v1h-1zM203 342h1v1h-1zM205 342h1v1h-1zM207 342h1v1h-1zM209 342h1v1h-1zM211 342h1v1h-1zM213 342h1v1h-1zM215 342h1v1h-1zM217 342h1v1h-1zM219 342h1v1h-1zM221 18h1v1h-1zM221 20h1v1h-1zM221 22h1v1h-1zM221 30h1v1h-1zM221 43h1v1h-1zM221 56h1v1h-1zM221 69h1v1h-1zM221 82h1v1h-1zM221 95h1v1h-1zM221 108h1v1h-1zM221 121h1v1h-1zM221 134h1v1h-1zM221 147h1v1h-1zM221 160h1v1h-1zM221 173h1v1h-1zM221 186h1v1h-1zM221 199h1v1h-1zM221 212h1v1h-1zM221 225h1v1h-1zM221 238h1v1h-1zM221 251h1v1h-1zM221 264h1v1h-1zM221 277h1v1h-1zM221 290h1v1h-1zM221 303h1v1h-1zM221 316h1v1h-1zM221 329h1v1h-1zM221 339h1v1h-1zM221 341h1v1h-1zM221 342h1v1h-1zM221 343h1v1h-1zM221 345h1v1h-1zM221 355h1v1h-1zM221 368h1v1h-1zM221 381h1v1h-1zM221 394h1v1h-1zM221 407h1v1h-1zM221 420h1v1h-1zM221 433h1v1h-1zM221 446h1v1h-1zM221 459h1v1h-1zM221 472h1v1h-1zM221 485h1v1h-1zM221 498h1v1h-1zM221 511h1v1h-1zM221 524h1v1h-1zM221 537h1v1h-1zM221 550h1v1h-1zM221 563h1v1h-1zM221 576h1v1h-1zM221 589h1v1h-1zM221 602h1v1h-1zM221 615h1v1h-1zM221 628h1v1h-1zM221 641h1v1h-1zM221 654h1v1h-1zM221 662h1v1h-1zM221 664h1v1h-1zM221 666h1v1h-1zM223 342h1v1h-1zM225 342h1v1h-1zM227 342h1v1h-1zM229 342h1v1h-1zM231 342h1v1h-1zM233 342h1v1h-1zM235 342h1v1h-1zM237 342h1v1h-1zM239 342h1v1h-1zM241 17h1v1h-1zM241 19h1v1h-1zM241 82h1v1h-1zM241 147h1v1h-1zM241 212h1v1h-1zM241 277h1v1h-1zM241 339h1v1h-1zM241 341h1v1h-1zM241 342h1v1h-1zM241 343h1v1h-1zM241 345h1v1h-1zM241 407h1v1h-1zM241 472h1v1h-1zM241 537h1v1h-1zM241 602h1v1h-1zM241 665h1v1h-1zM241 667h1v1h-1zM243 342h1v1h-1zM245 342h1v1h-1zM247 342h1v1h-1zM249 342h1v1h-1zM251 342h1v1h-1zM253 342h1v1h-1zM255 342h1v1h-1zM257 342h1v1h-1zM259 342h1v1h-1zM261 17h1v1h-1zM261 19h1v1h-1zM261 82h1v1h-1zM261 147h1v1h-1zM261 212h1v1h-1zM261 277h1v1h-1zM261 339h1v1h-1zM261 341h1v1h-1zM261 342h1v1h-1zM261 343h1v1h-1zM261 345h1v1h-1zM261 407h1v1h-1zM261 472h1v1h-1zM261 537h1v1h-1zM261 602h1v1h-1zM261 665h1v1h-1zM261 667h1v1h-1zM263 342h1v1h-1zM265 342h1v1h-1zM267 342h1v1h-1zM269 342h1v1h-1zM271 342h1v1h-1zM273 342h1v1h-1zM275 342h1v1h-1zM277 342h1v1h-1zM279 342h1v1h-1zM281 17h1v1h-1zM281 19h1v1h-1zM281 82h1v1h-1zM281 147h1v1h-1zM281 212h1v1h-1zM281 277h1v1h-1zM281 339h1v1h-1zM281 341h1v1h-1zM281 342h1v1h-1zM281 343h1v1h-1zM281 345h1v1h-1zM281 407h1v1h-1zM281 472h1v1h-1zM281 537h1v1h-1zM281 602h1v1h-1zM281 665h1v1h-1zM281 667h1v1h-1zM283 342h1v1h-1zM285 342h1v1h-1zM287 342h1v1h-1zM289 342h1v1h-1zM291 342h1v1h-1zM293 342h1v1h-1zM295 342h1v1h-1zM297 342h1v1h-1zM299 342h1v1h-1zM301 17h1v1h-1zM301 19h1v1h-1zM301 82h1v1h-1zM301 147h1v1h-1zM301 212h1v1h-1zM301 277h1v1h-1zM301 339h1v1h-1zM301 341h1v1h-1zM301 342h1v1h-1zM301 343h1v1h-1zM301 345h1v1h-1zM301 407h1v1h-1zM301 472h1v1h-1zM301 537h1v1h-1zM301 602h1v1h-1zM301 665h1v1h-1zM301 667h1v1h-1zM303 342h1v1h-1zM305 342h1v1h-1zM307 342h1v1h-1zM309 342h1v1h-1zM311 342h1v1h-1zM313 342h1v1h-1zM315 342h1v1h-1zM317 342h1v1h-1zM319 342h1v1h-1zM321 18h1v1h-1zM321 20h1v1h-1zM321 22h1v1h-1zM321 30h1v1h-1zM321 43h1v1h-1zM321 56h1v1h-1zM321 69h1v1h-1zM321 82h1v1h-1zM321 95h1v1h-1zM321 108h1v1h-1zM321 121h1v1h-1zM321 134h1v1h-1zM321 147h1v1h-1zM321 160h1v1h-1zM321 173h1v1h-1zM321 186h1v1h-1zM321 199h1v1h-1zM321 212h1v1h-1zM321 225h1v1h-1zM321 238h1v1h-1zM321 251h1v1h-1zM321 264h1v1h-1zM321 277h1v1h-1zM321 290h1v1h-1zM321 303h1v1h-1zM321 316h1v1h-1zM321 329h1v1h-1zM321 339h1v1h-1zM321 341h1v1h-1zM321 342h1v1h-1zM321 343h1v1h-1zM321 345h1v1h-1zM321 355h1v1h-1zM321 368h1v1h-1zM321 381h1v1h-1zM321 394h1v1h-1zM321 407h1v1h-1zM321 420h1v1h-1zM321 433h1v1h-1zM321 446h1v1h-1zM321 459h1v1h-1zM321 472h1v1h-1zM321 485h1v1h-1zM321 498h1v1h-1zM321 511h1v1h-1zM321 524h1v1h-1zM321 537h1v1h-1zM321 550h1v1h-1zM321 563h1v1h-1zM321 576h1v1h-1zM321 589h1v1h-1zM321 602h1v1h-1zM321 615h1v1h-1zM321 628h1v1h-1zM321 641h1v1h-1zM321 654h1v1h-1zM321 662h1v1h-1zM321 664h1v1h-1zM321 666h1v1h-1zM323 342h1v1h-1zM325 342h1v1h-1zM327 342h1v1h-1zM329 342h1v1h-1zM331 342h1v1h-1zM333 342h1v1h-1zM335 342h1v1h-1zM337 342h1v1h-1zM339 342h1v1h-1zM341 17h1v1h-1zM341 19h1v1h-1zM341 82h1v1h-1zM341 147h1v1h-1zM341 212h1v1h-1zM341 277h1v1h-1zM341 339h1v1h-1zM341 341h1v1h-1zM341 342h1v1h-1zM341 343h1v1h-1zM341 345h1v1h-1zM341 407h1v1h-1zM341 472h1v1h-1zM341 537h1v1h-1zM341 602h1v1h-1zM341 665h1v1h-1zM341 667h1v1h-1zM343 342h1v1h-1zM345 342h1v1h-1zM347 342h1v1h-1zM349 342h1v1h-1zM351 342h1v1h-1zM353 342h1v1h-1zM355 342h1v1h-1zM357 342h1v1h-1zM359 342h1v1h-1zM361 17h1v1h-1zM361 19h1v1h-1zM361 82h1v1h-1zM361 147h1v1h-1zM361 212h1v1h-1zM361 277h1v1h-1zM361 339h1v1h-1zM361 341h1v1h-1zM361 342h1v1h-1zM361 343h1v1h-1zM361 345h1v1h-1zM361 407h1v1h-1zM361 472h1v1h-1zM361 537h1v1h-1zM361 602h1v1h-1zM361 665h1v1h-1zM361 667h1v1h-1zM363 342h1v1h-1zM365 342h1v1h-1zM367 342h1v1h-1zM369 342h1v1h-1zM371 342h1v1h-1zM373 342h1v1h-1zM375 342h1v1h-1zM377 342h1v1h-1zM379 342h1v1h-1zM381 17h1v1h-1zM381 19h1v1h-1zM381 82h1v1h-1zM381 147h1v1h-1zM381 212h1v1h-1zM381 277h1v1h-1zM381 339h1v1h-1zM381 341h1v1h-1zM381 342h1v1h-1zM381 343h1v1h-1zM381 345h1v1h-1zM381 407h1v1h-1zM381 472h1v1h-1zM381 537h1v1h-1zM381 602h1v1h-1zM381 665h1v1h-1zM381 667h1v1h-1zM383 342h1v1h-1zM385 342h1v1h-1zM387 342h1v1h-1zM389 342h1v1h-1zM391 342h1v1h-1zM393 342h1v1h-1zM395 342h1v1h-1zM397 342h1v1h-1zM399 342h1v1h-1zM401 17h1v1h-1zM401 19h1v1h-1zM401 82h1v1h-1zM401 147h1v1h-1zM401 212h1v1h-1zM401 277h1v1h-1zM401 339h1v1h-1zM401 341h1v1h-1zM401 342h1v1h-1zM401 343h1v1h-1zM401 345h1v1h-1zM401 407h1v1h-1zM401 472h1v1h-1zM401 537h1v1h-1zM401 602h1v1h-1zM401 665h1v1h-1zM401 667h1v1h-1zM403 342h1v1h-1zM405 342h1v1h-1zM407 342h1v1h-1zM409 342h1v1h-1zM411 342h1v1h-1zM413 342h1v1h-1zM415 342h1v1h-1zM417 342h1v1h-1zM419 342h1v1h-1zM421 18h1v1h-1zM421 20h1v1h-1zM421 22h1v1h-1zM421 30h1v1h-1zM421 43h1v1h-1zM421 56h1v1h-1zM421 69h1v1h-1zM421 82h1v1h-1zM421 95h1v1h-1zM421 108h1v1h-1zM421 121h1v1h-1zM421 134h1v1h-1zM421 147h1v1h-1zM421 160h1v1h-1zM421 173h1v1h-1zM421 186h1v1h-1zM421 199h1v1h-1zM421 212h1v1h-1zM421 225h1v1h-1zM421 238h1v1h-1zM421 251h1v1h-1zM421 264h1v1h-1zM421 277h1v1h-1zM421 290h1v1h-1zM421 303h1v1h-1zM421 316h1v1h-1zM421 329h1v1h-1zM421 339h1v1h-1zM421 341h1v1h-1zM421 342h1v1h-1zM421 343h1v1h-1zM421 345h1v1h-1zM421 355h1v1h-1zM421 368h1v1h-1zM421 381h1v1h-1zM421 394h1v1h-1zM421 407h1v1h-1zM421 420h1v1h-1zM421 433h1v1h-1zM421 446h1v1h-1zM421 459h1v1h-1zM421 472h1v1h-1zM421 485h1v1h-1zM421 498h1v1h-1zM421 511h1v1h-1zM421 524h1v1h-1zM421 537h1v1h-1zM421 550h1v1h-1zM421 563h1v1h-1zM421 576h1v1h-1zM421 589h1v1h-1zM421 602h1v1h-1zM421 615h1v1h-1zM421 628h1v1h-1zM421 641h1v1h-1zM421 654h1v1h-1zM421 662h1v1h-1zM421 664h1v1h-1zM421 666h1v1h-1zM423 342h1v1h-1zM425 342h1v1h-1zM427 342h1v1h-1zM429 342h1v1h-1zM431 342h1v1h-1zM433 342h1v1h-1zM435 342h1v1h-1zM437 342h1v1h-1zM439 342h1v1h-1zM441 17h1v1h-1zM441 19h1v1h-1zM441 82h1v1h-1zM441 147h1v1h-1zM441 212h1v1h-1zM441 277h1v1h-1zM441 339h1v1h-1zM441 341h1v1h-1zM441 342h1v1h-1zM441 343h1v1h-1zM441 345h1v1h-1zM441 407h1v1h-1zM441 472h1v1h-1zM441 537h1v1h-1zM441 602h1v1h-1zM441 665h1v1h-1zM441 667h1v1h-1zM443 342h1v1h-1zM445 342h1v1h-1zM447 342h1v1h-1zM449 342h1v1h-1zM451 342h1v1h-1zM453 342h1v1h-1zM455 342h1v1h-1zM457 342h1v1h-1zM459 342h1v1h-1zM461 17h1v1h-1zM461 19h1v1h-1zM461 82h1v1h-1zM461 147h1v1h-1zM461 212h1v1h-1zM461 277h1v1h-1zM461 339h1v1h-1zM461 341h1v1h-1zM461 342h1v1h-1zM461 343h1v1h-1zM461 345h1v1h-1zM461 407h1v1h-1zM461 472h1v1h-1zM461 537h1v1h-1zM461 602h1v1h-1zM461 665h1v1h-1zM461 667h1v1h-1zM463 342h1v1h-1zM465 342h1v1h-1zM467 342h1v1h-1zM469 342h1v1h-1zM471 342h1v1h-1zM473 342h1v1h-1zM475 342h1v1h-1zM477 342h1v1h-1zM479 342h1v1h-1zM481 17h1v1h-1zM481 19h1v1h-1zM481 82h1v1h-1zM481 147h1v1h-1zM481 212h1v1h-1zM481 277h1v1h-1zM481 339h1v1h-1zM481 341h1v1h-1zM481 342h1v1h-1zM481 343h1v1h-1zM481 345h1v1h-1zM481 407h1v1h-1zM481 472h1v1h-1zM481 537h1v1h-1zM481 602h1v1h-1zM481 665h1v1h-1zM481 667h1v1h-1zM483 342h1v1h-1zM485 342h1v1h-1zM487 342h1v1h-1zM489 342h1v1h-1zM491 342h1v1h-1zM493 342h1v1h-1zM495 342h1v1h-1zM497 342h1v1h-1zM499 342h1v1h-1zM501 17h1v1h-1zM501 19h1v1h-1zM501 82h1v1h-1zM501 147h1v1h-1zM501 212h1v1h-1zM501 277h1v1h-1zM501 339h1v1h-1zM501 341h1v1h-1zM501 342h1v1h-1zM501 343h1v1h-1zM501 345h1v1h-1zM501 407h1v1h-1zM501 472h1v1h-1zM501 537h1v1h-1zM501 602h1v1h-1zM501 665h1v1h-1zM501 667h1v1h-1zM503 342h1v1h-1zM505 342h1v1h-1zM507 342h1v1h-1zM509 342h1v1h-1zM511 342h1v1h-1zM513 342h1v1h-1zM515 342h1v1h-1zM517 342h1v1h-1zM518 30h1v1h-1zM518 43h1v1h-1zM518 56h1v1h-1zM518 69h1v1h-1zM518 82h1v1h-1zM518 95h1v1h-1zM518 108h1v1h-1zM518 121h1v1h-1zM518 134h1v1h-1zM518 147h1v1h-1zM518 160h1v1h-1zM518 173h1v1h-1zM518 186h1v1h-1zM518 199h1v1h-1zM518 212h1v1h-1zM518 225h1v1h-1zM518 238h1v1h-1zM518 251h1v1h-1zM518 264h1v1h-1zM518 277h1v1h-1zM518 290h1v1h-1zM518 303h1v1h-1zM518 316h1v1h-1zM518 329h1v1h-1zM518 342h1v1h-1zM518 355h1v1h-1zM518 368h1v1h-1zM518 381h1v1h-1zM518 394h1v1h-1zM518 407h1v1h-1zM518 420h1v1h-1zM518 433h1v1h-1zM518 446h1v1h-1zM518 459h1v1h-1zM518 472h1v1h-1zM518 485h1v1h-1zM518 498h1v1h-1zM518 511h1v1h-1zM518 524h1v1h-1zM518 537h1v1h-1zM518 550h1v1h-1zM518 563h1v1h-1zM518 576h1v1h-1zM518 589h1v1h-1zM518 602h1v1h-1zM518 615h1v1h-1zM518 628h1v1h-1zM518 641h1v1h-1zM518 654h1v1h-1zM519 342h1v1h-1zM520 30h1v1h-1zM520 43h1v1h-1zM520 56h1v1h-1zM520 69h1v1h-1zM520 82h1v1h-1zM520 95h1v1h-1zM520 108h1v1h-1zM520 121h1v1h-1zM520 134h1v1h-1zM520 147h1v1h-1zM520 160h1v1h-1zM520 173h1v1h-1zM520 186h1v1h-1zM520 199h1v1h-1zM520 212h1v1h-1zM520 225h1v1h-1zM520 238h1v1h-1zM520 251h1v1h-1zM520 264h1v1h-1zM520 277h1v1h-1zM520 290h1v1h-1zM520 303h1v1h-1zM520 316h1v1h-1zM520 329h1v1h-1zM520 342h1v1h-1zM520 355h1v1h-1zM520 368h1v1h-1zM520 381h1v1h-1zM520 394h1v1h-1zM520 407h1v1h-1zM520 420h1v1h-1zM520 433h1v1h-1zM520 446h1v1h-1zM520 459h1v1h-1zM520 472h1v1h-1zM520 485h1v1h-1zM520 498h1v1h-1zM520 511h1v1h-1zM520 524h1v1h-1zM520 537h1v1h-1zM520 550h1v1h-1zM520 563h1v1h-1zM520 576h1v1h-1zM520 589h1v1h-1zM520 602h1v1h-1zM520 615h1v1h-1zM520 628h1v1h-1zM520 641h1v1h-1zM520 654h1v1h-1zM521 18h1v1h-1zM521 20h1v1h-1zM521 22h1v1h-1zM521 24h1v1h-1zM521 26h1v1h-1zM521 28h1v1h-1zM521 30h1v1h-1zM521 32h1v1h-1zM521 34h1v1h-1zM521 36h1v1h-1zM521 38h1v1h-1zM521 40h1v1h-1zM521 42h1v1h-1zM521 43h1v1h-1zM521 44h1v1h-1zM521 46h1v1h-1zM521 48h1v1h-1zM521 50h1v1h-1zM521 52h1v1h-1zM521 54h1v1h-1zM521 56h1v1h-1zM521 58h1v1h-1zM521 60h1v1h-1zM521 62h1v1h-1zM521 64h1v1h-1zM521 66h1v1h-1zM521 68h1v1h-1zM521 69h1v1h-1zM521 70h1v1h-1zM521 72h1v1h-1zM521 74h1v1h-1zM521 76h1v1h-1zM521 78h1v1h-1zM521 80h1v1h-1zM521 82h1v1h-1zM521 84h1v1h-1zM521 86h1v1h-1zM521 88h1v1h-1zM521 90h1v1h-1zM521 92h1v1h-1zM521 94h1v1h-1zM521 95h1v1h-1zM521 96h1v1h-1zM521 98h1v1h-1zM521 100h1v1h-1zM521 102h1v1h-1zM521 104h1v1h-1zM521 106h1v1h-1zM521 108h1v1h-1zM521 110h1v1h-1zM521 112h1v1h-1zM521 114h1v1h-1zM521 116h1v1h-1zM521 118h1v1h-1zM521 120h1v1h-1zM521 121h1v1h-1zM521 122h1v1h-1zM521 124h1v1h-1zM521 126h1v1h-1zM521 128h1v1h-1zM521 130h1v1h-1zM521 132h1v1h-1zM521 134h1v1h-1zM521 136h1v1h-1zM521 138h1v1h-1zM521 140h1v1h-1zM521 142h1v1h-1zM521 144h1v1h-1zM521 146h1v1h-1zM521 147h1v1h-1zM521 148h1v1h-1zM521 150h1v1h-1zM521 152h1v1h-1zM521 154h1v1h-1zM521 156h1v1h-1zM521 158h1v1h-1zM521 160h1v1h-1zM521 162h1v1h-1zM521 164h1v1h-1zM521 166h1v1h-1zM521 168h1v1h-1zM521 170h1v1h-1zM521 172h1v1h-1zM521 173h1v1h-1zM521 174h1v1h-1zM521 176h1v1h-1zM521 178h1v1h-1zM521 180h1v1h-1zM521 182h1v1h-1zM521 184h1v1h-1zM521 186h1v1h-1zM521 188h1v1h-1zM521 190h1v1h-1zM521 192h1v1h-1zM521 194h1v1h-1zM521 196h1v1h-1zM521 198h1v1h-1zM521 199h1v1h-1zM521 200h1v1h-1zM521 202h1v1h-1zM521 204h1v1h-1zM521 206h1v1h-1zM521 208h1v1h-1zM521 210h1v1h-1zM521 212h1v1h-1zM521 214h1v1h-1zM521 216h1v1h-1zM521 218h1v1h-1zM521 220h1v1h-1zM521 222h1v1h-1zM521 224h1v1h-1zM521 225h1v1h-1zM521 226h1v1h-1zM521 228h1v1h-1zM521 230h1v1h-1zM521 232h1v1h-1zM521 234h1v1h-1zM521 236h1v1h-1zM521 238h1v1h-1zM521 240h1v1h-1zM521 242h1v1h-1zM521 244h1v1h-1zM521 246h1v1h-1zM521 248h1v1h-1zM521 250h1v1h-1zM521 251h1v1h-1zM521 252h1v1h-1zM521 254h1v1h-1zM521 256h1v1h-1zM521 258h1v1h-1zM521 260h1v1h-1zM521 262h1v1h-1zM521 264h1v1h-1zM521 266h1v1h-1zM521 268h1v1h-1zM521 270h1v1h-1zM521 272h1v1h-1zM521 274h1v1h-1zM521 276h1v1h-1zM521 277h1v1h-1zM521 278h1v1h-1zM521 280h1v1h-1zM521 282h1v1h-1zM521 284h1v1h-1zM521 286h1v1h-1zM521 288h1v1h-1zM521 290h1v1h-1zM521 292h1v1h-1zM521 294h1v1h-1zM521 296h1v1h-1zM521 298h1v1h-1zM521 300h1v1h-1zM521 302h1v1h-1zM521 303h1v1h-1zM521 304h1v1h-1zM521 306h1v1h-1zM521 308h1v1h-1zM521 310h1v1h-1zM521 312h1v1h-1zM521 314h1v1h-1zM521 316h1v1h-1zM521 318h1v1h-1zM521 320h1v1h-1zM521 322h1v1h-1zM521 324h1v1h-1zM521 326h1v1h-1zM521 328h1v1h-1zM521 329h1v1h-1zM521 330h1v1h-1zM521 332h1v1h-1zM521 334h1v1h-1zM521 336h1v1h-1zM521 338h1v1h-1zM521 339h1v1h-1zM521 340h1v1h-1zM521 341h1v1h-1zM521 342h1v1h-1zM521 343h1v1h-1zM521 344h1v1h-1zM521 345h1v1h-1zM521 346h1v1h-1zM521 348h1v1h-1zM521 350h1v1h-1zM521 352h1v1h-1zM521 354h1v1h-1zM521 355h1v1h-1zM521 356h1v1h-1zM521 358h1v1h-1zM521 360h1v1h-1zM521 362h1v1h-1zM521 364h1v1h-1zM521 366h1v1h-1zM521 368h1v1h-1zM521 370h1v1h-1zM521 372h1v1h-1zM521 374h1v1h-1zM521 376h1v1h-1zM521 378h1v1h-1zM521 380h1v1h-1zM521 381h1v1h-1zM521 382h1v1h-1zM521 384h1v1h-1zM521 386h1v1h-1zM521 388h1v1h-1zM521 390h1v1h-1zM521 392h1v1h-1zM521 394h1v1h-1zM521 396h1v1h-1zM521 398h1v1h-1zM521 400h1v1h-1zM521 402h1v1h-1zM521 404h1v1h-1zM521 406h1v1h-1zM521 407h1v1h-1zM521 408h1v1h-1zM521 410h1v1h-1zM521 412h1v1h-1zM521 414h1v1h-1zM521 416h1v1h-1zM521 418h1v1h-1zM521 420h1v1h-1zM521 422h1v1h-1zM521 424h1v1h-1zM521 426h1v1h-1zM521 428h1v1h-1zM521 430h1v1h-1zM521 432h1v1h-1zM521 433h1v1h-1zM521 434h1v1h-1zM521 436h1v1h-1zM521 438h1v1h-1zM521 440h1v1h-1zM521 442h1v1h-1zM521 444h1v1h-1zM521 446h1v1h-1zM521 448h1v1h-1zM521 450h1v1h-1zM521 452h1v1h-1zM521 454h1v1h-1zM521 456h1v1h-1zM521 458h1v1h-1zM521 459h1v1h-1zM521 460h1v1h-1zM521 462h1v1h-1zM521 464h1v1h-1zM521 466h1v1h-1zM521 468h1v1h-1zM521 470h1v1h-1zM521 472h1v1h-1zM521 474h1v1h-1zM521 476h1v1h-1zM521 478h1v1h-1zM521 480h1v1h-1zM521 482h1v1h-1zM521 484h1v1h-1zM521 485h1v1h-1zM521 486h1v1h-1zM521 488h1v1h-1zM521 490h1v1h-1zM521 492h1v1h-1zM521 494h1v1h-1zM521 496h1v1h-1zM521 498h1v1h-1zM521 500h1v1h-1zM521 502h1v1h-1zM521 504h1v1h-1zM521 506h1v1h-1zM521 508h1v1h-1zM521 510h1v1h-1zM521 511h1v1h-1zM521 512h1v1h-1zM521 514h1v1h-1zM521 516h1v1h-1zM521 518h1v1h-1zM521 520h1v1h-1zM521 522h1v1h-1zM521 524h1v1h-1zM521 526h1v1h-1zM521 528h1v1h-1zM521 530h1v1h-1zM521 532h1v1h-1zM521 534h1v1h-1zM521 536h1v1h-1zM521 537h1v1h-1zM521 538h1v1h-1zM521 540h1v1h-1zM521 542h1v1h-1zM521 544h1v1h-1zM521 546h1v1h-1zM521 548h1v1h-1zM521 550h1v1h-1zM521 552h1v1h-1zM521 554h1v1h-1zM521 556h1v1h-1zM521 558h1v1h-1zM521 560h1v1h-1zM521 562h1v1h-1zM521 563h1v1h-1zM521 564h1v1h-1zM521 566h1v1h-1zM521 568h1v1h-1zM521 570h1v1h-1zM521 572h1v1h-1zM521 574h1v1h-1zM521 576h1v1h-1zM521 578h1v1h-1zM521 580h1v1h-1zM521 582h1v1h-1zM521 584h1v1h-1zM521 586h1v1h-1zM521 588h1v1h-1zM521 589h1v1h-1zM521 590h1v1h-1zM521 592h1v1h-1zM521 594h1v1h-1zM521 596h1v1h-1zM521 598h1v1h-1zM521 600h1v1h-1zM521 602h1v1h-1zM521 604h1v1h-1zM521 606h1v1h-1zM521 608h1v1h-1zM521 610h1v1h-1zM521 612h1v1h-1zM521 614h1v1h-1zM521 615h1v1h-1zM521 616h1v1h-1zM521 618h1v1h-1zM521 620h1v1h-1zM521 622h1v1h-1zM521 624h1v1h-1zM521 626h1v1h-1zM521 628h1v1h-1zM521 630h1v1h-1zM521 632h1v1h-1zM521 634h1v1h-1zM521 636h1v1h-1zM521 638h1v1h-1zM521 640h1v1h-1zM521 641h1v1h-1zM521 642h1v1h-1zM521 644h1v1h-1zM521 646h1v1h-1zM521 648h1v1h-1zM521 650h1v1h-1zM521 652h1v1h-1zM521 654h1v1h-1zM521 656h1v1h-1zM521 658h1v1h-1zM521 660h1v1h-1zM521 662h1v1h-1zM521 664h1v1h-1zM521 666h1v1h-1zM522 30h1v1h-1zM522 43h1v1h-1zM522 56h1v1h-1zM522 69h1v1h-1zM522 82h1v1h-1zM522 95h1v1h-1zM522 108h1v1h-1zM522 121h1v1h-1zM522 134h1v1h-1zM522 147h1v1h-1zM522 160h1v1h-1zM522 173h1v1h-1zM522 186h1v1h-1zM522 199h1v1h-1zM522 212h1v1h-1zM522 225h1v1h-1zM522 238h1v1h-1zM522 251h1v1h-1zM522 264h1v1h-1zM522 277h1v1h-1zM522 290h1v1h-1zM522 303h1v1h-1zM522 316h1v1h-1zM522 329h1v1h-1zM522 342h1v1h-1zM522 355h1v1h-1zM522 368h1v1h-1zM522 381h1v1h-1zM522 394h1v1h-1zM522 407h1v1h-1zM522 420h1v1h-1zM522 433h1v1h-1zM522 446h1v1h-1zM522 459h1v1h-1zM522 472h1v1h-1zM522 485h1v1h-1zM522 498h1v1h-1zM522 511h1v1h-1zM522 524h1v1h-1zM522 537h1v1h-1zM522 550h1v1h-1zM522 563h1v1h-1zM522 576h1v1h-1zM522 589h1v1h-1zM522 602h1v1h-1zM522 615h1v1h-1zM522 628h1v1h-1zM522 641h1v1h-1zM522 654h1v1h-1zM523 342h1v1h-1zM524 30h1v1h-1zM524 43h1v1h-1zM524 56h1v1h-1zM524 69h1v1h-1zM524 82h1v1h-1zM524 95h1v1h-1zM524 108h1v1h-1zM524 121h1v1h-1zM524 134h1v1h-1zM524 147h1v1h-1zM524 160h1v1h-1zM524 173h1v1h-1zM524 186h1v1h-1zM524 199h1v1h-1zM524 212h1v1h-1zM524 225h1v1h-1zM524 238h1v1h-1zM524 251h1v1h-1zM524 264h1v1h-1zM524 277h1v1h-1zM524 290h1v1h-1zM524 303h1v1h-1zM524 316h1v1h-1zM524 329h1v1h-1zM524 342h1v1h-1zM524 355h1v1h-1zM524 368h1v1h-1zM524 381h1v1h-1zM524 394h1v1h-1zM524 407h1v1h-1zM524 420h1v1h-1zM524 433h1v1h-1zM524 446h1v1h-1zM524 459h1v1h-1zM524 472h1v1h-1zM524 485h1v1h-1zM524 498h1v1h-1zM524 511h1v1h-1zM524 524h1v1h-1zM524 537h1v1h-1zM524 550h1v1h-1zM524 563h1v1h-1zM524 576h1v1h-1zM524 589h1v1h-1zM524 602h1v1h-1zM524 615h1v1h-1zM524 628h1v1h-1zM524 641h1v1h-1zM524 654h1v1h-1zM525 342h1v1h-1zM527 342h1v1h-1zM529 342h1v1h-1zM531 342h1v1h-1zM533 342h1v1h-1zM535 342h1v1h-1zM537 342h1v1h-1zM539 342h1v1h-1zM541 17h1v1h-1zM541 19h1v1h-1zM541 82h1v1h-1zM541 147h1v1h-1zM541 212h1v1h-1zM541 277h1v1h-1zM541 339h1v1h-1zM541 341h1v1h-1zM541 342h1v1h-1zM541 343h1v1h-1zM541 345h1v1h-1zM541 407h1v1h-1zM541 472h1v1h-1zM541 537h1v1h-1zM541 602h1v1h-1zM541 665h1v1h-1zM541 667h1v1h-1zM543 342h1v1h-1zM545 342h1v1h-1zM547 342h1v1h-1zM549 342h1v1h-1zM551 342h1v1h-1zM553 342h1v1h-1zM555 342h1v1h-1zM557 342h1v1h-1zM559 342h1v1h-1zM561 17h1v1h-1zM561 19h1v1h-1zM561 82h1v1h-1zM561 147h1v1h-1zM561 212h1v1h-1zM561 277h1v1h-1zM561 339h1v1h-1zM561 341h1v1h-1zM561 342h1v1h-1zM561 343h1v1h-1zM561 345h1v1h-1zM561 407h1v1h-1zM561 472h1v1h-1zM561 537h1v1h-1zM561 602h1v1h-1zM561 665h1v1h-1zM561 667h1v1h-1zM563 342h1v1h-1zM565 342h1v1h-1zM567 342h1v1h-1zM569 342h1v1h-1zM571 342h1v1h-1zM573 342h1v1h-1zM575 342h1v1h-1zM577 342h1v1h-1zM579 342h1v1h-1zM581 17h1v1h-1zM581 19h1v1h-1zM581 82h1v1h-1zM581 147h1v1h-1zM581 212h1v1h-1zM581 277h1v1h-1zM581 339h1v1h-1zM581 341h1v1h-1zM581 342h1v1h-1zM581 343h1v1h-1zM581 345h1v1h-1zM581 407h1v1h-1zM581 472h1v1h-1zM581 537h1v1h-1zM581 602h1v1h-1zM581 665h1v1h-1zM581 667h1v1h-1zM583 342h1v1h-1zM585 342h1v1h-1zM587 342h1v1h-1zM589 342h1v1h-1zM591 342h1v1h-1zM593 342h1v1h-1zM595 342h1v1h-1zM597 342h1v1h-1zM599 342h1v1h-1zM601 17h1v1h-1zM601 19h1v1h-1zM601 82h1v1h-1zM601 147h1v1h-1zM601 212h1v1h-1zM601 277h1v1h-1zM601 339h1v1h-1zM601 341h1v1h-1zM601 342h1v1h-1zM601 343h1v1h-1zM601 345h1v1h-1zM601 407h1v1h-1zM601 472h1v1h-1zM601 537h1v1h-1zM601 602h1v1h-1zM601 665h1v1h-1zM601 667h1v1h-1zM603 342h1v1h-1zM605 342h1v1h-1zM607 342h1v1h-1zM609 342h1v1h-1zM611 342h1v1h-1zM613 342h1v1h-1zM615 342h1v1h-1zM617 342h1v1h-1zM619 342h1v1h-1zM621 18h1v1h-1zM621 20h1v1h-1zM621 22h1v1h-1zM621 30h1v1h-1zM621 43h1v1h-1zM621 56h1v1h-1zM621 69h1v1h-1zM621 82h1v1h-1zM621 95h1v1h-1zM621 108h1v1h-1zM621 121h1v1h-1zM621 134h1v1h-1zM621 147h1v1h-1zM621 160h1v1h-1zM621 173h1v1h-1zM621 186h1v1h-1zM621 199h1v1h-1zM621 212h1v1h-1zM621 225h1v1h-1zM621 238h1v1h-1zM621 251h1v1h-1zM621 264h1v1h-1zM621 277h1v1h-1zM621 290h1v1h-1zM621 303h1v1h-1zM621 316h1v1h-1zM621 329h1v1h-1zM621 339h1v1h-1zM621 341h1v1h-1zM621 342h1v1h-1zM621 343h1v1h-1zM621 345h1v1h-1zM621 355h1v1h-1zM621 368h1v1h-1zM621 381h1v1h-1zM621 394h1v1h-1zM621 407h1v1h-1zM621 420h1v1h-1zM621 433h1v1h-1zM621 446h1v1h-1zM621 459h1v1h-1zM621 472h1v1h-1zM621 485h1v1h-1zM621 498h1v1h-1zM621 511h1v1h-1zM621 524h1v1h-1zM621 537h1v1h-1zM621 550h1v1h-1zM621 563h1v1h-1zM621 576h1v1h-1zM621 589h1v1h-1zM621 602h1v1h-1zM621 615h1v1h-1zM621 628h1v1h-1zM621 641h1v1h-1zM621 654h1v1h-1zM621 662h1v1h-1zM621 664h1v1h-1zM621 666h1v1h-1zM623 342h1v1h-1zM625 342h1v1h-1zM627 342h1v1h-1zM629 342h1v1h-1zM631 342h1v1h-1zM633 342h1v1h-1zM635 342h1v1h-1zM637 342h1v1h-1zM639 342h1v1h-1zM641 17h1v1h-1zM641 19h1v1h-1zM641 82h1v1h-1zM641 147h1v1h-1zM641 212h1v1h-1zM641 277h1v1h-1zM641 339h1v1h-1zM641 341h1v1h-1zM641 342h1v1h-1zM641 343h1v1h-1zM641 345h1v1h-1zM641 407h1v1h-1zM641 472h1v1h-1zM641 537h1v1h-1zM641 602h1v1h-1zM641 665h1v1h-1zM641 667h1v1h-1zM643 342h1v1h-1zM645 342h1v1h-1zM647 342h1v1h-1zM649 342h1v1h-1zM651 342h1v1h-1zM653 342h1v1h-1zM655 342h1v1h-1zM657 342h1v1h-1zM659 342h1v1h-1zM661 17h1v1h-1zM661 19h1v1h-1zM661 82h1v1h-1zM661 147h1v1h-1zM661 212h1v1h-1zM661 277h1v1h-1zM661 339h1v1h-1zM661 341h1v1h-1zM661 342h1v1h-1zM661 343h1v1h-1zM661 345h1v1h-1zM661 407h1v1h-1zM661 472h1v1h-1zM661 537h1v1h-1zM661 602h1v1h-1zM661 665h1v1h-1zM661 667h1v1h-1zM663 342h1v1h-1zM665 342h1v1h-1zM667 342h1v1h-1zM669 342h1v1h-1zM671 342h1v1h-1zM673 342h1v1h-1zM675 342h1v1h-1zM677 342h1v1h-1zM679 342h1v1h-1zM681 17h1v1h-1zM681 19h1v1h-1zM681 82h1v1h-1zM681 147h1v1h-1zM681 212h1v1h-1zM681 277h1v1h-1zM681 339h1v1h-1zM681 341h1v1h-1zM681 342h1v1h-1zM681 343h1v1h-1zM681 345h1v1h-1zM681 407h1v1h-1zM681 472h1v1h-1zM681 537h1v1h-1zM681 602h1v1h-1zM681 665h1v1h-1zM681 667h1v1h-1zM683 342h1v1h-1zM685 342h1v1h-1zM687 342h1v1h-1zM689 342h1v1h-1zM691 342h1v1h-1zM693 342h1v1h-1zM695 342h1v1h-1zM697 342h1v1h-1zM699 342h1v1h-1zM701 17h1v1h-1zM701 19h1v1h-1zM701 82h1v1h-1zM701 147h1v1h-1zM701 212h1v1h-1zM701 277h1v1h-1zM701 339h1v1h-1zM701 341h1v1h-1zM701 342h1v1h-1zM701 343h1v1h-1zM701 345h1v1h-1zM701 407h1v1h-1zM701 472h1v1h-1zM701 537h1v1h-1zM701 602h1v1h-1zM701 665h1v1h-1zM701 667h1v1h-1zM703 342h1v1h-1zM705 342h1v1h-1zM707 342h1v1h-1zM709 342h1v1h-1zM711 342h1v1h-1zM713 342h1v1h-1zM715 342h1v1h-1zM717 342h1v1h-1zM719 342h1v1h-1zM721 18h1v1h-1zM721 20h1v1h-1zM721 22h1v1h-1zM721 30h1v1h-1zM721 43h1v1h-1zM721 56h1v1h-1zM721 69h1v1h-1zM721 82h1v1h-1zM721 95h1v1h-1zM721 108h1v1h-1zM721 121h1v1h-1zM721 134h1v1h-1zM721 147h1v1h-1zM721 160h1v1h-1zM721 173h1v1h-1zM721 186h1v1h-1zM721 199h1v1h-1zM721 212h1v1h-1zM721 225h1v1h-1zM721 238h1v1h-1zM721 251h1v1h-1zM721 264h1v1h-1zM721 277h1v1h-1zM721 290h1v1h-1zM721 303h1v1h-1zM721 316h1v1h-1zM721 329h1v1h-1zM721 339h1v1h-1zM721 341h1v1h-1zM721 342h1v1h-1zM721 343h1v1h-1zM721 345h1v1h-1zM721 355h1v1h-1zM721 368h1v1h-1zM721 381h1v1h-1zM721 394h1v1h-1zM721 407h1v1h-1zM721 420h1v1h-1zM721 433h1v1h-1zM721 446h1v1h-1zM721 459h1v1h-1zM721 472h1v1h-1zM721 485h1v1h-1zM721 498h1v1h-1zM721 511h1v1h-1zM721 524h1v1h-1zM721 537h1v1h-1zM721 550h1v1h-1zM721 563h1v1h-1zM721 576h1v1h-1zM721 589h1v1h-1zM721 602h1v1h-1zM721 615h1v1h-1zM721 628h1v1h-1zM721 641h1v1h-1zM721 654h1v1h-1zM721 662h1v1h-1zM721 664h1v1h-1zM721 666h1v1h-1zM723 342h1v1h-1zM725 342h1v1h-1zM727 342h1v1h-1zM729 342h1v1h-1zM731 342h1v1h-1zM733 342h1v1h-1zM735 342h1v1h-1zM737 342h1v1h-1zM739 342h1v1h-1zM741 17h1v1h-1zM741 19h1v1h-1zM741 82h1v1h-1zM741 147h1v1h-1zM741 212h1v1h-1zM741 277h1v1h-1zM741 339h1v1h-1zM741 341h1v1h-1zM741 342h1v1h-1zM741 343h1v1h-1zM741 345h1v1h-1zM741 407h1v1h-1zM741 472h1v1h-1zM741 537h1v1h-1zM741 602h1v1h-1zM741 665h1v1h-1zM741 667h1v1h-1zM743 342h1v1h-1zM745 342h1v1h-1zM747 342h1v1h-1zM749 342h1v1h-1zM751 342h1v1h-1zM753 342h1v1h-1zM755 342h1v1h-1zM757 342h1v1h-1zM759 342h1v1h-1zM761 17h1v1h-1zM761 19h1v1h-1zM761 82h1v1h-1zM761 147h1v1h-1zM761 212h1v1h-1zM761 277h1v1h-1zM761 339h1v1h-1zM761 341h1v1h-1zM761 342h1v1h-1zM761 343h1v1h-1zM761 345h1v1h-1zM761 407h1v1h-1zM761 472h1v1h-1zM761 537h1v1h-1zM761 602h1v1h-1zM761 665h1v1h-1zM761 667h1v1h-1zM763 342h1v1h-1zM765 342h1v1h-1zM767 342h1v1h-1zM769 342h1v1h-1zM771 342h1v1h-1zM773 342h1v1h-1zM775 342h1v1h-1zM777 342h1v1h-1zM779 342h1v1h-1zM781 17h1v1h-1zM781 19h1v1h-1zM781 82h1v1h-1zM781 147h1v1h-1zM781 212h1v1h-1zM781 277h1v1h-1zM781 339h1v1h-1zM781 341h1v1h-1zM781 342h1v1h-1zM781 343h1v1h-1zM781 345h1v1h-1zM781 407h1v1h-1zM781 472h1v1h-1zM781 537h1v1h-1zM781 602h1v1h-1zM781 665h1v1h-1zM781 667h1v1h-1zM783 342h1v1h-1zM785 342h1v1h-1zM787 342h1v1h-1zM789 342h1v1h-1zM791 342h1v1h-1zM793 342h1v1h-1zM795 342h1v1h-1zM797 342h1v1h-1zM799 342h1v1h-1zM801 17h1v1h-1zM801 19h1v1h-1zM801 82h1v1h-1zM801 147h1v1h-1zM801 212h1v1h-1zM801 277h1v1h-1zM801 339h1v1h-1zM801 341h1v1h-1zM801 342h1v1h-1zM801 343h1v1h-1zM801 345h1v1h-1zM801 407h1v1h-1zM801 472h1v1h-1zM801 537h1v1h-1zM801 602h1v1h-1zM801 665h1v1h-1zM801 667h1v1h-1zM803 342h1v1h-1zM805 342h1v1h-1zM807 342h1v1h-1zM809 342h1v1h-1zM811 342h1v1h-1zM813 342h1v1h-1zM815 342h1v1h-1zM817 342h1v1h-1zM819 342h1v1h-1zM821 18h1v1h-1zM821 20h1v1h-1zM821 22h1v1h-1zM821 30h1v1h-1zM821 43h1v1h-1zM821 56h1v1h-1zM821 69h1v1h-1zM821 82h1v1h-1zM821 95h1v1h-1zM821 108h1v1h-1zM821 121h1v1h-1zM821 134h1v1h-1zM821 147h1v1h-1zM821 160h1v1h-1zM821 173h1v1h-1zM821 186h1v1h-1zM821 199h1v1h-1zM821 212h1v1h-1zM821 225h1v1h-1zM821 238h1v1h-1zM821 251h1v1h-1zM821 264h1v1h-1zM821 277h1v1h-1zM821 290h1v1h-1zM821 303h1v1h-1zM821 316h1v1h-1zM821 329h1v1h-1zM821 339h1v1h-1zM821 341h1v1h-1zM821 342h1v1h-1zM821 343h1v1h-1zM821 345h1v1h-1zM821 355h1v1h-1zM821 368h1v1h-1zM821 381h1v1h-1zM821 394h1v1h-1zM821 407h1v1h-1zM821 420h1v1h-1zM821 433h1v1h-1zM821 446h1v1h-1zM821 459h1v1h-1zM821 472h1v1h-1zM821 485h1v1h-1zM821 498h1v1h-1zM821 511h1v1h-1zM821 524h1v1h-1zM821 537h1v1h-1zM821 550h1v1h-1zM821 563h1v1h-1zM821 576h1v1h-1zM821 589h1v1h-1zM821 602h1v1h-1zM821 615h1v1h-1zM821 628h1v1h-1zM821 641h1v1h-1zM821 654h1v1h-1zM821 662h1v1h-1zM821 664h1v1h-1zM821 666h1v1h-1zM823 342h1v1h-1zM825 342h1v1h-1zM827 342h1v1h-1zM829 342h1v1h-1zM831 342h1v1h-1zM833 342h1v1h-1zM835 342h1v1h-1zM837 342h1v1h-1zM839 342h1v1h-1zM841 17h1v1h-1zM841 19h1v1h-1zM841 82h1v1h-1zM841 147h1v1h-1zM841 212h1v1h-1zM841 277h1v1h-1zM841 339h1v1h-1zM841 341h1v1h-1zM841 342h1v1h-1zM841 343h1v1h-1zM841 345h1v1h-1zM841 407h1v1h-1zM841 472h1v1h-1zM841 537h1v1h-1zM841 602h1v1h-1zM841 665h1v1h-1zM841 667h1v1h-1zM843 342h1v1h-1zM845 342h1v1h-1zM847 342h1v1h-1zM849 342h1v1h-1zM851 342h1v1h-1zM853 342h1v1h-1zM855 342h1v1h-1zM857 342h1v1h-1zM859 342h1v1h-1zM861 17h1v1h-1zM861 19h1v1h-1zM861 82h1v1h-1zM861 147h1v1h-1zM861 212h1v1h-1zM861 277h1v1h-1zM861 339h1v1h-1zM861 341h1v1h-1zM861 342h1v1h-1zM861 343h1v1h-1zM861 345h1v1h-1zM861 407h1v1h-1zM861 472h1v1h-1zM861 537h1v1h-1zM861 602h1v1h-1zM861 665h1v1h-1zM861 667h1v1h-1zM863 342h1v1h-1zM865 342h1v1h-1zM867 342h1v1h-1zM869 342h1v1h-1zM871 342h1v1h-1zM873 342h1v1h-1zM875 342h1v1h-1zM877 342h1v1h-1zM879 342h1v1h-1zM881 17h1v1h-1zM881 19h1v1h-1zM881 82h1v1h-1zM881 147h1v1h-1zM881 212h1v1h-1zM881 277h1v1h-1zM881 339h1v1h-1zM881 341h1v1h-1zM881 342h1v1h-1zM881 343h1v1h-1zM881 345h1v1h-1zM881 407h1v1h-1zM881 472h1v1h-1zM881 537h1v1h-1zM881 602h1v1h-1zM881 665h1v1h-1zM881 667h1v1h-1zM883 342h1v1h-1zM885 342h1v1h-1zM887 342h1v1h-1zM889 342h1v1h-1zM891 342h1v1h-1zM893 342h1v1h-1zM895 342h1v1h-1zM897 342h1v1h-1zM899 342h1v1h-1zM901 17h1v1h-1zM901 19h1v1h-1zM901 82h1v1h-1zM901 147h1v1h-1zM901 212h1v1h-1zM901 277h1v1h-1zM901 339h1v1h-1zM901 341h1v1h-1zM901 342h1v1h-1zM901 343h1v1h-1zM901 345h1v1h-1zM901 407h1v1h-1zM901 472h1v1h-1zM901 537h1v1h-1zM901 602h1v1h-1zM901 665h1v1h-1zM901 667h1v1h-1zM903 342h1v1h-1zM905 342h1v1h-1zM907 342h1v1h-1zM909 342h1v1h-1zM911 342h1v1h-1zM913 342h1v1h-1zM915 342h1v1h-1zM917 342h1v1h-1zM919 342h1v1h-1zM921 18h1v1h-1zM921 20h1v1h-1zM921 22h1v1h-1zM921 30h1v1h-1zM921 43h1v1h-1zM921 56h1v1h-1zM921 69h1v1h-1zM921 82h1v1h-1zM921 95h1v1h-1zM921 108h1v1h-1zM921 121h1v1h-1zM921 134h1v1h-1zM921 147h1v1h-1zM921 160h1v1h-1zM921 173h1v1h-1zM921 186h1v1h-1zM921 199h1v1h-1zM921 212h1v1h-1zM921 225h1v1h-1zM921 238h1v1h-1zM921 251h1v1h-1zM921 264h1v1h-1zM921 277h1v1h-1zM921 290h1v1h-1zM921 303h1v1h-1zM921 316h1v1h-1zM921 329h1v1h-1zM921 339h1v1h-1zM921 341h1v1h-1zM921 342h1v1h-1zM921 343h1v1h-1zM921 345h1v1h-1zM921 355h1v1h-1zM921 368h1v1h-1zM921 381h1v1h-1zM921 394h1v1h-1zM921 407h1v1h-1zM921 420h1v1h-1zM921 433h1v1h-1zM921 446h1v1h-1zM921 459h1v1h-1zM921 472h1v1h-1zM921 485h1v1h-1zM921 498h1v1h-1zM921 511h1v1h-1zM921 524h1v1h-1zM921 537h1v1h-1zM921 550h1v1h-1zM921 563h1v1h-1zM921 576h1v1h-1zM921 589h1v1h-1zM921 602h1v1h-1zM921 615h1v1h-1zM921 628h1v1h-1zM921 641h1v1h-1zM921 654h1v1h-1zM921 662h1v1h-1zM921 664h1v1h-1zM921 666h1v1h-1zM923 342h1v1h-1zM925 342h1v1h-1zM927 342h1v1h-1zM929 342h1v1h-1zM931 342h1v1h-1zM933 342h1v1h-1zM935 342h1v1h-1zM937 342h1v1h-1zM939 342h1v1h-1zM941 17h1v1h-1zM941 19h1v1h-1zM941 82h1v1h-1zM941 147h1v1h-1zM941 212h1v1h-1zM941 277h1v1h-1zM941 339h1v1h-1zM941 341h1v1h-1zM941 342h1v1h-1zM941 343h1v1h-1zM941 345h1v1h-1zM941 407h1v1h-1zM941 472h1v1h-1zM941 537h1v1h-1zM941 602h1v1h-1zM941 665h1v1h-1zM941 667h1v1h-1zM943 342h1v1h-1zM945 342h1v1h-1zM947 342h1v1h-1zM949 342h1v1h-1zM951 342h1v1h-1zM953 342h1v1h-1zM955 342h1v1h-1zM957 342h1v1h-1zM959 342h1v1h-1zM961 17h1v1h-1zM961 19h1v1h-1zM961 82h1v1h-1zM961 147h1v1h-1zM961 212h1v1h-1zM961 277h1v1h-1zM961 339h1v1h-1zM961 341h1v1h-1zM961 342h1v1h-1zM961 343h1v1h-1zM961 345h1v1h-1zM961 407h1v1h-1zM961 472h1v1h-1zM961 537h1v1h-1zM961 602h1v1h-1zM961 665h1v1h-1zM961 667h1v1h-1zM963 342h1v1h-1zM965 342h1v1h-1zM967 342h1v1h-1zM969 342h1v1h-1zM971 342h1v1h-1zM973 342h1v1h-1zM975 342h1v1h-1zM977 342h1v1h-1zM979 342h1v1h-1zM981 17h1v1h-1zM981 19h1v1h-1zM981 82h1v1h-1zM981 147h1v1h-1zM981 212h1v1h-1zM981 277h1v1h-1zM981 339h1v1h-1zM981 341h1v1h-1zM981 342h1v1h-1zM981 343h1v1h-1zM981 345h1v1h-1zM981 407h1v1h-1zM981 472h1v1h-1zM981 537h1v1h-1zM981 602h1v1h-1zM981 665h1v1h-1zM981 667h1v1h-1zM983 342h1v1h-1zM985 342h1v1h-1zM987 342h1v1h-1zM989 342h1v1h-1zM991 342h1v1h-1zM993 342h1v1h-1zM995 342h1v1h-1zM997 342h1v1h-1zM999 342h1v1h-1zM1001 17h1v1h-1zM1001 19h1v1h-1zM1001 82h1v1h-1zM1001 147h1v1h-1zM1001 212h1v1h-1zM1001 277h1v1h-1zM1001 339h1v1h-1zM1001 341h1v1h-1zM1001 342h1v1h-1zM1001 343h1v1h-1zM1001 345h1v1h-1zM1001 407h1v1h-1zM1001 472h1v1h-1zM1001 537h1v1h-1zM1001 602h1v1h-1zM1001 665h1v1h-1zM1001 667h1v1h-1zM1003 342h1v1h-1zM1005 342h1v1h-1zM1007 342h1v1h-1zM1009 342h1v1h-1zM1011 342h1v1h-1zM1013 342h1v1h-1zM1015 82h1v1h-1zM1015 147h1v1h-1zM1015 212h1v1h-1zM1015 277h1v1h-1zM1015 342h1v1h-1zM1015 407h1v1h-1zM1015 472h1v1h-1zM1015 537h1v1h-1zM1015 602h1v1h-1zM1017 82h1v1h-1zM1017 147h1v1h-1zM1017 212h1v1h-1zM1017 277h1v1h-1zM1017 342h1v1h-1zM1017 407h1v1h-1zM1017 472h1v1h-1zM1017 537h1v1h-1zM1017 602h1v1h-1zM1018 30h1v1h-1zM1018 43h1v1h-1zM1018 56h1v1h-1zM1018 69h1v1h-1zM1018 95h1v1h-1zM1018 108h1v1h-1zM1018 121h1v1h-1zM1018 134h1v1h-1zM1018 160h1v1h-1zM1018 173h1v1h-1zM1018 186h1v1h-1zM1018 199h1v1h-1zM1018 225h1v1h-1zM1018 238h1v1h-1zM1018 251h1v1h-1zM1018 264h1v1h-1zM1018 290h1v1h-1zM1018 303h1v1h-1zM1018 316h1v1h-1zM1018 329h1v1h-1zM1018 355h1v1h-1zM1018 368h1v1h-1zM1018 381h1v1h-1zM1018 394h1v1h-1zM1018 420h1v1h-1zM1018 433h1v1h-1zM1018 446h1v1h-1zM1018 459h1v1h-1zM1018 485h1v1h-1zM1018 498h1v1h-1zM1018 511h1v1h-1zM1018 524h1v1h-1zM1018 550h1v1h-1zM1018 563h1v1h-1zM1018 576h1v1h-1zM1018 589h1v1h-1zM1018 615h1v1h-1zM1018 628h1v1h-1zM1018 641h1v1h-1zM1018 654h1v1h-1zM1019 82h1v1h-1zM1019 147h1v1h-1zM1019 212h1v1h-1zM1019 277h1v1h-1zM1019 342h1v1h-1zM1019 407h1v1h-1zM1019 472h1v1h-1zM1019 537h1v1h-1zM1019 602h1v1h-1zM1020 30h1v1h-1zM1020 43h1v1h-1zM1020 56h1v1h-1zM1020 69h1v1h-1zM1020 95h1v1h-1zM1020 108h1v1h-1zM1020 121h1v1h-1zM1020 134h1v1h-1zM1020 160h1v1h-1zM1020 173h1v1h-1zM1020 186h1v1h-1zM1020 199h1v1h-1zM1020 225h1v1h-1zM1020 238h1v1h-1zM1020 251h1v1h-1zM1020 264h1v1h-1zM1020 290h1v1h-1zM1020 303h1v1h-1zM1020 316h1v1h-1zM1020 329h1v1h-1zM1020 355h1v1h-1zM1020 368h1v1h-1zM1020 381h1v1h-1zM1020 394h1v1h-1zM1020 420h1v1h-1zM1020 433h1v1h-1zM1020 446h1v1h-1zM1020 459h1v1h-1zM1020 485h1v1h-1zM1020 498h1v1h-1zM1020 511h1v1h-1zM1020 524h1v1h-1zM1020 550h1v1h-1zM1020 563h1v1h-1zM1020 576h1v1h-1zM1020 589h1v1h-1zM1020 615h1v1h-1zM1020 628h1v1h-1zM1020 641h1v1h-1zM1020 654h1v1h-1z"/>
<!-- trigger markers top -->
<path fill="#ff9900" d="M518 1h8l-4 4z"/>
<path fill="#ff9900" d="M518 5h7v1h1v8l-1 1h-7l-1-1v-8h1z"/>
<path fill="#000" d="M518 6h6v2h-6zM520 8h2v7h-2z"/>
<path fill="#ff9900" d="M516 17h11l-5.5 6z"/>
<path fill="#ff9900" d="M516 24h10l1 1v10l-3 3h-6l-3-3v-10z"/>
<path fill="#000" d="M517 25h9v2h-9zM520 27h2v9h-2z"/>
<!-- ch3 marker -->
<path fill="none" stroke="#ff55ff" stroke-width="1.5" d="M0.75 204.75h11.5l7.5 7.5l-7.5 7.5h-11.5z" shape-rendering="geometricPrecision"/>
<!-- ch1 marker -->
<path fill="#ffff00" d="M0 654h13l7 7.5l-7 8.5h-13z" shape-rendering="geometricPrecision"/>
<path fill="#000" d="M6 657h3v11h-3zM5 658h1v1h-1z"/>
<!-- trigger level marker right -->
<path fill="#ffff00" d="M1010 571.5l6 -6v12z" shape-rendering="geometricPrecision"/>
<path fill="#ffff00" d="M1016 571h5v1h-5z"/>
</svg>

<div class="box" style="left:20px;top:670px;width:555px;height:21px;border-radius:6px"></div>
<div class="box" style="left:582px;top:670px;width:148px;height:38px"></div>
<div class="box" style="left:737px;top:670px;width:107px;height:38px"></div>
<div class="box" style="left:851px;top:670px;width:171px;height:38px"></div>
<div class="box" style="left:909px;top:729px;width:113px;height:37px;border-radius:7px"></div>
<div class="pill" style="left:26px;top:673px;width:25px;height:16px"></div>
<div class="pill" style="left:304px;top:673px;width:25px;height:16px;background:#a01eb0"></div>
<div class="pill" style="left:882px;top:673px;width:25px;height:16px"></div>
<div style="position:absolute;left:0;top:714px;width:17px;height:54px;background:#ffff00;border-radius:0 5px 5px 0"></div>
<div class="btn" style="left:20px;top:714px;width:114px;height:60px"></div>
<div class="btn" style="left:138px;top:714px;width:114px;height:60px"></div>
<div class="btn" style="left:256px;top:714px;width:114px;height:60px"></div>
<div class="btn" style="left:374px;top:714px;width:114px;height:54px"></div>
<div class="btn" style="left:492px;top:714px;width:114px;height:54px"></div>
<div class="btn" style="left:728px;top:714px;width:114px;height:54px"></div>
<div class="hl" style="left:33px;top:742px;width:30px;height:26px"></div>
<div class="hl" style="left:143px;top:742px;width:46px;height:26px"></div>
<div class="hl" style="left:325px;top:742px;width:33px;height:26px"></div>
<div class="hl" style="left:401px;top:742px;width:60px;height:16px;border-radius:0;border:0"></div>
<div class="hl" style="left:531px;top:742px;width:36px;height:16px;border-radius:0;border:0"></div>
<div class="pill" style="left:514px;top:725px;width:25px;height:16px"></div>
<div class="t" style="left:35.0px;top:0.0px;font-family:'Liberation Sans';font-weight:normal;font-size:16px;letter-spacing:0.7px;color:#ffffff">Run</div>
<div class="t" style="left:925.0px;top:0.0px;font-family:'Liberation Sans';font-weight:normal;font-size:16px;letter-spacing:0.75px;color:#ffffff">Trig?</div>
<div class="t" style="left:68.0px;top:673.0px;font-family:'Liberation Sans';font-weight:normal;font-size:16px;letter-spacing:0.8px;color:#ffff00">2.00 V</div>
<div class="t" style="left:346.3px;top:673.0px;font-family:'Liberation Sans';font-weight:normal;font-size:16px;letter-spacing:0.84px;color:#b022c0">100mV</div>
<div class="t" style="left:408.5px;top:673.0px;font-family:'Liberation Sans';font-weight:normal;font-size:16px;letter-spacing:0.0px;color:#b022c0">Ω</div>
<div class="t" style="left:588.9px;top:673.0px;font-family:'Liberation Sans';font-weight:normal;font-size:16px;letter-spacing:0.84px;color:#ffffff">10.0ms</div>
<div class="t" style="left:623.2px;top:690.0px;font-family:'Liberation Sans';font-weight:normal;font-size:16px;letter-spacing:0.74px;color:#ff9900">0.000000 s</div>
<div class="t" style="left:742.7px;top:673.0px;font-family:'Liberation Sans';font-weight:normal;font-size:16px;letter-spacing:1.09px;color:#ffffff">50.0MS/s</div>
<div class="t" style="left:743.0px;top:690.0px;font-family:'Liberation Sans';font-weight:normal;font-size:16px;letter-spacing:1.38px;color:#ffffff">5M points</div>
<div class="t" style="left:964.7px;top:673.0px;font-family:'Liberation Sans';font-weight:normal;font-size:16px;letter-spacing:0.72px;color:#ffffff">2.80 V</div>
<div class="t" style="left:40.9px;top:720.0px;font-family:'Liberation Sans';font-weight:normal;font-size:16px;letter-spacing:1.43px;color:#ffffff">Coupling</div>
<div class="t" style="left:38.0px;top:747.0px;font-family:'Liberation Sans';font-weight:normal;font-size:16px;letter-spacing:-1.0px;color:#ffffff">DC</div>
<div class="t" style="left:95.0px;top:747.0px;font-family:'Liberation Sans';font-weight:normal;font-size:16px;letter-spacing:-0.4px;color:#ffffff">AC</div>
<div class="t" style="left:146.4px;top:720.0px;font-family:'Liberation Sans';font-weight:normal;font-size:16px;letter-spacing:1.52px;color:#ffffff">Termination</div>
<div class="t" style="left:148.8px;top:747.0px;font-family:'Liberation Sans';font-weight:normal;font-size:16px;letter-spacing:1.6px;color:#ffffff">1MΩ</div>
<div class="t" style="left:207.0px;top:747.0px;font-family:'Liberation Sans';font-weight:normal;font-size:16px;letter-spacing:1.4px;color:#ffffff">50Ω</div>
<div class="t" style="left:288.7px;top:720.0px;font-family:'Liberation Sans';font-weight:normal;font-size:16px;letter-spacing:1.68px;color:#ffffff">Invert</div>
<div class="t" style="left:272.0px;top:747.0px;font-family:'Liberation Sans';font-weight:normal;font-size:16px;letter-spacing:2.0px;color:#ffffff">On</div>
<div class="t" style="left:329.0px;top:747.0px;font-family:'Liberation Sans';font-weight:normal;font-size:16px;letter-spacing:2.0px;color:#ffffff">Off</div>
<div class="t" style="left:388.7px;top:725.0px;font-family:'Liberation Sans';font-weight:normal;font-size:15px;letter-spacing:1.82px;color:#ffffff">Bandwidth</div>
<div class="t" style="left:403.0px;top:742.0px;font-family:'Liberation Sans';font-weight:normal;font-size:16px;letter-spacing:1.16px;color:#ffffff">20MHz</div>
<div class="t" style="left:545.2px;top:724.5px;font-family:'Liberation Sans';font-weight:normal;font-size:15px;letter-spacing:1.2px;color:#ffffff">Label</div>
<div class="t" style="left:533.9px;top:742.0px;font-family:'Liberation Sans';font-weight:normal;font-size:16px;letter-spacing:-0.6px;color:#ffffff">ACK</div>
<div class="t" style="left:765.5px;top:740.0px;font-family:'Liberation Sans';font-weight:normal;font-size:15px;letter-spacing:2.0px;color:#ffffff">More</div>
<div class="t" style="left:915.0px;top:733.0px;font-family:'Liberation Sans';font-weight:normal;font-size:15px;letter-spacing:1.2px;color:#ffffff">29</div>
<div class="t" style="left:940.0px;top:733.0px;font-family:'Liberation Sans';font-weight:normal;font-size:15px;letter-spacing:3.0px;color:#ffffff">Apr</div>
<div class="t" style="left:978.0px;top:733.0px;font-family:'Liberation Sans';font-weight:normal;font-size:15px;letter-spacing:1.6px;color:#ffffff">2024</div>
<div class="t" style="left:915.0px;top:749.0px;font-family:'Liberation Sans';font-weight:normal;font-size:15px;letter-spacing:1.63px;color:#ffffff">20:01:33</div>
<div class="t bk" style="left:312px;top:674px">3</div>
<div class="t tek" style="left:0px">T</div><div class="t tek" style="left:8px">e</div><div class="t tek" style="left:19px">k</div>
<svg width="1024" height="768" style="position:absolute;left:0;top:0" shape-rendering="crispEdges"><path fill="#000" d="M38 675h2v11h-2zM36 676h2v1h-2zM894 675h2v11h-2zM892 676h2v1h-2zM526 727h2v11h-2zM524 728h2v1h-2zM8 737h2v11h-2zM6 738h2v1h-2zM7 657h2v11h-2zM5 658h2v1h-2z"/></svg>
<div class="t" style="left:3.5px;top:205px;font-size:13.5px;color:#c020c0">3</div>
<svg width="1024" height="768" style="position:absolute;left:0;top:0" shape-rendering="crispEdges">
<path fill="#ff9900" d="M587 692l1-1h10l1 1v11l-1 1h-10l-1-1z"/>
<path fill="#000" d="M589 692h8v2h-8zM592 694h2v9h-2z"/>
<path fill="#ff9900" d="M600 697h5v1h-5z"/>
<path fill="#ff9900" d="M604 694l5 3.5l-5 3.5z" shape-rendering="geometricPrecision"/>
<path fill="#ff9900" d="M610 694h11l-5.5 6z" shape-rendering="geometricPrecision"/>
<path fill="#ffff00" d="M144 675h1v7h-1zM145 675h2v1h-2zM145 678h2v1h-2zM145 681h2v1h-2zM147 676h1v2h-1zM147 679h1v2h-1zM148 679h1v6h-1zM150 681h1v4h-1zM152 679h1v6h-1zM149 684h1v2h-1zM151 684h1v2h-1z"/>
<path fill="#b022c0" d="M422 677h1v7h-1zM423 677h2v1h-2zM423 680h2v1h-2zM423 683h2v1h-2zM425 678h1v2h-1zM425 681h1v2h-1zM426 681h1v6h-1zM428 683h1v4h-1zM430 681h1v6h-1zM427 686h1v2h-1zM429 686h1v2h-1z"/>
<path fill="none" stroke="#fff" stroke-width="1.8" d="M920 685h5l2.6-9h4.4" shape-rendering="geometricPrecision"/>
<path fill="#e8e8e8" d="M785 727l11 11h-22z" shape-rendering="geometricPrecision"/>
<path fill="#8a8a8a" d="M780 735h10v2h-10z"/><path fill="#a8a8a8" d="M777 737h16v1h-16z"/>
</svg>

</body></html>
